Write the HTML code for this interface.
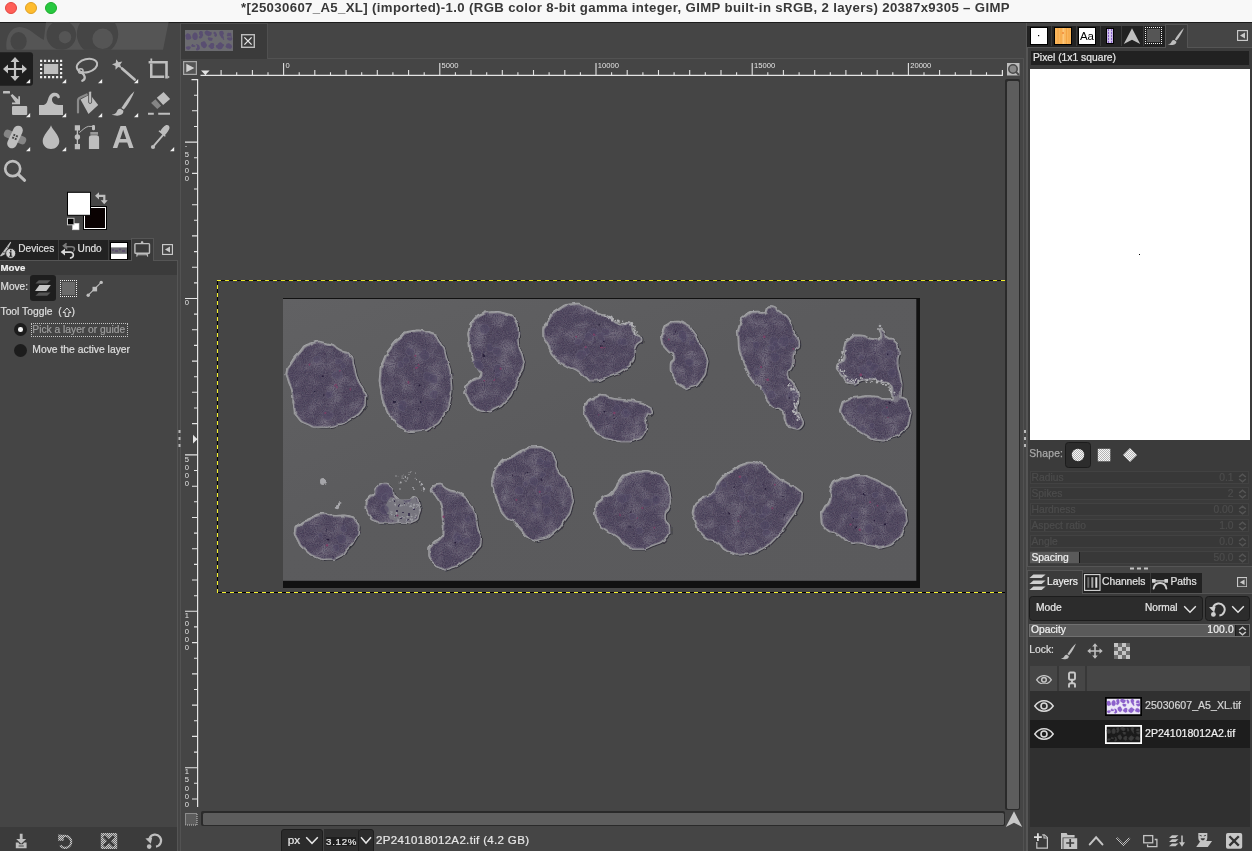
<!DOCTYPE html>
<html lang="en">
<head>
<meta charset="utf-8">
<title>GIMP</title>
<style>
*{box-sizing:border-box;margin:0;padding:0}
html,body{width:1252px;height:851px;overflow:hidden;background:#454545;font-family:"Liberation Sans",sans-serif;color:#dcdcdc;font-size:10.4px}
.abs,.abs *{position:absolute}
#root{position:relative;width:1252px;height:851px;overflow:hidden;background:#454545;will-change:transform}
#root div,#root svg,#root span{position:absolute}
.t{white-space:nowrap;line-height:1;-webkit-text-stroke:0.22px currentColor}
/* title bar */
#titlebar{left:0;top:0;width:1252px;height:23px;background:#f8f8f8;border-bottom:1px solid #1c1c1c}
#titlebar .dot{width:12px;height:12px;border-radius:50%;top:2px}
#title{left:241px;top:1px;font-weight:bold;font-size:13.2px;letter-spacing:0.357px;color:#383838;white-space:nowrap;line-height:14px}
</style>
</head>
<body>
<div id="root">

<!-- TITLEBAR -->
<div id="titlebar">
  <div class="dot" style="left:5px;background:#ff5f57;border:0.5px solid #e2463f"></div>
  <div class="dot" style="left:25px;background:#febc2e;border:0.5px solid #dfa023"></div>
  <div class="dot" style="left:45px;background:#28c840;border:0.5px solid #1dad2b"></div>
  <div id="title">*[25030607_A5_XL] (imported)-1.0 (RGB color 8-bit gamma integer, GIMP built-in sRGB, 2 layers) 20387x9305 – GIMP</div>
</div>

<!-- LEFT-PANEL -->
<svg style="left:0;top:0" width="181" height="240" viewBox="0 0 181 240">
<clipPath id="wb"><rect x="0" y="22.6" width="180" height="27.2"/></clipPath>
<g clip-path="url(#wb)">
<path d="M6.8 50C5 40 9 27.2 19.5 27 C29 27 36 36 43.8 40 L46 22 L168.6 22 L163 50Z" fill="#555"/>
<ellipse cx="18.6" cy="41.2" rx="8.1" ry="9.2" fill="#454545"/>
<circle cx="61.3" cy="35" r="14.8" fill="#454545"/>
<circle cx="65" cy="37.2" r="6.2" fill="#555"/>
<circle cx="97.5" cy="34.2" r="20.7" fill="#454545"/>
<circle cx="102.7" cy="38.7" r="10.3" fill="#555"/>
</g>
<rect x="-3" y="52.3" width="36" height="33.4" rx="3" fill="#1e1e1e"/>
<path d="M15 57l4.500 5h-3.400v5.900h5.900v-3.400l5 4.500-5 4.500v-3.400h-5.900v5.900h3.400L15 81l-4.500-5h3.400v-5.900H8v3.400L3 69l5-4.500v3.400h5.900v-5.900h-3.400z" fill="#c4c4c4"/>
<path d="M30.2 79.0V83.2H26.0z" fill="#f0f0f0"/>
<path d="M40 59.8h2.2v2.2h-2.2zM40 76h2.2v2.2h-2.2zM44 59.8h2.2v2.2h-2.2zM44 76h2.2v2.2h-2.2zM48 59.8h2.2v2.2h-2.2zM48 76h2.2v2.2h-2.2zM52 59.8h2.2v2.2h-2.2zM52 76h2.2v2.2h-2.2zM56 59.8h2.2v2.2h-2.2zM56 76h2.2v2.2h-2.2zM60 59.8h2.2v2.2h-2.2zM60 76h2.2v2.2h-2.2zM40 63.85h2.2v2.2h-2.2zM60 63.85h2.2v2.2h-2.2zM40 67.90h2.2v2.2h-2.2zM60 67.90h2.2v2.2h-2.2zM40 71.95h2.2v2.2h-2.2zM60 71.95h2.2v2.2h-2.2z" fill="#ececec"/>
<rect x="44" y="64" width="14.2" height="10" fill="#bebebe"/>
<path d="M66.2 79.0V83.2H62.0z" fill="#f0f0f0"/>
<g fill="none" stroke="#bebebe" stroke-width="2" stroke-linecap="round"><ellipse cx="87" cy="65.600" rx="10.400" ry="6.500" transform="rotate(-14 87 65.6)"/><circle cx="80.800" cy="71" r="2.300" stroke-width="1.400"/><path d="M81.500 72.500c3.500 2.500 4.800 6.500 0.800 8.200" stroke-width="2.300"/></g>
<path d="M102.2 79.0V83.2H98.0z" fill="#f0f0f0"/>
<path d="M116.2 59.2L118.5 62.3L122.3 61.6L120.1 64.8L121.9 68.2L118.2 67.0L115.5 69.8L115.5 65.9L112.0 64.2L115.7 63.0z" fill="#bebebe"/><path d="M122 68.400l12.600 11.200" stroke="#bebebe" stroke-width="2.700" stroke-linecap="round"/>
<path d="M138.2 79.0V83.2H134.0z" fill="#f0f0f0"/>
<path d="M148.600 61h19.200v17.400h-2.600V63.500h-16.600z" fill="#bebebe"/><path d="M150 63.500h2.500v12h11.700v2.500H150z" fill="#bebebe"/><path d="M150.400 58.600h1.800v2.400h-1.800zM167.800 75.400l2 1.500-2 1.500z" fill="#bebebe"/>
<rect x="3" y="91" width="7" height="2.6" rx="0.6" fill="#bebebe"/><path d="M10.6 95.6l1.7-1.7 6 5.5v-3.2h1.7v8h-8v-1.7h3.6z" fill="#bebebe"/><rect x="12" y="106" width="15.2" height="9" rx="1" fill="#bebebe"/>
<path d="M30.2 113.0V117.2H26.0z" fill="#f0f0f0"/>
<path d="M39 115v-10h3.5c3.6 0 4.6-2.6 5.6-6 1.3-4.4 3.7-6.2 6.6-6.2 3 0 5 2 5.3 4.8l-2 .9c-.8-1.8-1.8-2.3-3-2.3-1.8 0-3 1.400-3 3.400 0 3.200 2.800 5.400 6.400 5.400H63v10z" fill="#bebebe"/>
<path d="M66.2 113.0V117.2H62.0z" fill="#f0f0f0"/>
<path d="M78 112.400v-11.500c0-1.700.9-2.800 2.200-3.300l6.500-3.100" fill="none" stroke="#8a8a8a" stroke-width="2.200" stroke-linecap="round"/><path d="M80.500 99.500l9.500-5 8.200 10.500-9.700 9z" fill="#bebebe"/><rect x="88.600" y="91" width="3" height="12.500" rx="1.500" fill="#bebebe" stroke="#454545" stroke-width="0.800"/>
<path d="M102.2 113.0V117.2H98.0z" fill="#f0f0f0"/>
<path d="M134.300 91.200c-1.500 5-6 13-10.500 18.400l-2.400-1.600c4.400-6.800 8.500-12.800 12.900-16.800z" fill="#bebebe"/><path d="M120.600 108.700l2.600 1.800c1 3-2.500 5.200-6 5.200-2.200 0-4.200-.4-5.400-1.100 3.200-.3 4.300-1.300 5-3 .7-1.800 1.800-3.200 3.800-2.900z" fill="#bebebe"/>
<path d="M138.2 113.0V117.2H134.0z" fill="#f0f0f0"/>
<path d="M163.600 92l6.500 7-7 6-6.300-7.200z" fill="#bebebe"/><path d="M155.400 99.200l5.700 6.500-3.800 3.300-6.200-6z" fill="#858585"/><path d="M148 112.800h5.800v2h-5.800zM158.200 112.800h11.800v2h-11.800z" fill="#bebebe"/>
<g transform="rotate(25 15 137)"><rect x="3.200" y="133" width="23.600" height="8" rx="3.600" fill="#858585"/><rect x="10.200" y="125" width="9.600" height="24" rx="4.800" fill="#bebebe"/><path d="M12.600 134.600h1.900v1.900h-1.900zM15.500 134.600h1.900v1.900h-1.900zM12.600 137.500h1.900v1.900h-1.900zM15.500 137.500h1.900v1.900h-1.900z" fill="#454545"/></g>
<path d="M30.2 147.0V151.2H26.0z" fill="#f0f0f0"/>
<path d="M51 125.300c1.200 4.200 8.300 10 8.300 15.600 0 4.600-3.700 8-8.300 8s-8.300-3.400-8.300-8c0-5.600 7.100-11.400 8.300-15.600z" fill="#bebebe"/>
<path d="M66.2 147.0V151.2H62.0z" fill="#f0f0f0"/>
<path d="M74.800 125.200h5.200v5.200h-5.200zM74.800 144h5.200v5.200h-5.200z" fill="#bebebe"/><circle cx="77.400" cy="137" r="2.700" fill="#bebebe"/><path d="M77.400 130v14" stroke="#bebebe" stroke-width="1.300"/><path d="M79.400 132.600c3-2.600 6-5.600 9-6.200h4" fill="none" stroke="#bebebe" stroke-width="0.900"/><rect x="92" y="125" width="3" height="5.200" rx="1.200" fill="#bebebe"/><rect x="90.300" y="132" width="7.700" height="2.700" fill="#9a9a9a"/><path d="M88.900 149v-11c0-1.600 1-2.700 2.600-2.700h5c1.600 0 2.600 1.100 2.600 2.700v11z" fill="#bebebe"/>
<text x="123.100" y="148.200" font-size="31" font-weight="bold" text-anchor="middle" fill="#bebebe" font-family="Liberation Sans, sans-serif">A</text>
<path d="M166.200 125c2.200-.5 3.800 1.400 3.200 3.600-.5 2-2.600 4.600-4.400 6.300l.8 1-1 .9-1.100-1-9.200 10.800-1.500-1.400 9.300-10.600-3.800-3.300.9-1 1 .7c1.200-2 3.600-5.300 5.800-6z" fill="#bebebe"/><circle cx="153" cy="147" r="2.100" fill="#bebebe"/>
<path d="M174.2 147.0V151.2H170.0z" fill="#f0f0f0"/>
<circle cx="12.700" cy="168.700" r="7.500" fill="none" stroke="#bebebe" stroke-width="2.700"/><path d="M18.300 174.300l6.300 6" stroke="#bebebe" stroke-width="3" stroke-linecap="round"/>
<rect x="83.500" y="206.500" width="23" height="23" fill="#0a0202" stroke="#000" stroke-width="1"/><rect x="84.500" y="207.500" width="21" height="21" fill="none" stroke="#fff" stroke-width="1"/>
<rect x="67.500" y="192.300" width="23" height="23" fill="#fff" stroke="#000" stroke-width="1"/>
<path d="M95 195.800l4-3.600v2.500h6.400v5.600h2.300l-3.500 4-3.500-4h2.500v-3.400h-4.200v2.500z" fill="#bebebe"/>
<rect x="72.500" y="223.300" width="6.500" height="6.500" fill="#fff" stroke="#d0d0d0" stroke-width="0.600"/><rect x="67.500" y="218.300" width="6.500" height="6.500" fill="#000" stroke="#c8c8c8" stroke-width="1"/>
</svg>
<!-- tool options dock: tab bar -->
<div style="left:0;top:240px;width:130.500px;height:20px;background:#222"></div>
<div style="left:58px;top:240px;width:1px;height:20px;background:#3c3c3c"></div>
<div style="left:107.500px;top:240px;width:1px;height:20px;background:#3c3c3c"></div>
<div style="left:130.500px;top:237.500px;width:23px;height:23.500px;background:#3b3b3b;border:1px solid #555;border-bottom:none"></div>
<div style="left:0;top:260px;width:131px;height:1px;background:#555"></div>
<div style="left:153px;top:260px;width:25px;height:1px;background:#555"></div>
<div style="left:177px;top:260px;width:1px;height:591px;background:#555"></div>
<!-- devices tab -->
<svg style="left:0;top:241px" width="18" height="19" viewBox="0 0 18 19"><path d="M10.400 0.800L2.400 11.600 0 14.800l.8.800 3.800-2.200 6.600-12z" fill="#bebebe"/><path d="M2.600 10.600l2.200 1.400M6.500 5.500l1.200.8" stroke="#222" stroke-width="0.700"/><circle cx="10.700" cy="12.400" r="5" fill="#d0d0d0" stroke="#222" stroke-width="0.800"/><path d="M10 8.800h1.500v1.600H10zM9.300 11.200h2.200v3.600h.8v1H9.200v-1h.8v-2.600h-.7z" fill="#222"/></svg>
<span class="t" style="left:18.300px;top:243.800px;font-size:10.100px;color:#dedede">Devices</span>
<!-- undo tab -->
<svg style="left:59.500px;top:242px" width="18" height="18" viewBox="0 0 18 18"><path d="M6.500 1.200L3.400 3.800l3.100 2.600V4.700h5.200c1.700 0 2.800 1 2.800 2.400 0 1-.5 1.800-1.400 2.200" fill="none" stroke="#7a7a7a" stroke-width="1.500"/><path d="M6.500 1.200L3 3.800l3.500 2.600z" fill="#7a7a7a"/><path d="M5 6.600L.6 10.100 5 13.600v-2.600h5.200c1.500 0 2.300.8 2.300 2 0 1.300-1 2.200-2.600 2.300v1.600c2.700-.1 4.300-1.700 4.300-3.900 0-2.200-1.600-3.700-4-3.700H5z" fill="#d8d8d8"/></svg>
<span class="t" style="left:77.600px;top:243.800px;font-size:10.100px;color:#dedede">Undo</span>
<!-- images tab -->
<svg style="left:110px;top:241.500px" width="18" height="18" viewBox="0 0 18 18"><rect x="0.500" y="0.500" width="17" height="17" fill="#fff" stroke="#000"/><rect x="1" y="5.400" width="16" height="6.400" fill="#6a6a70"/><path d="M2 8h2M5 9h3M9 7.500h2M12 9h3" stroke="#5a4a6e" stroke-width="1.400"/></svg>
<!-- tool options tab (active) -->
<svg style="left:133px;top:240px" width="18" height="18" viewBox="0 0 18 18"><path d="M8.200 1.200h1.800l.5 2h-2.800z" fill="#bebebe"/><rect x="1.900" y="3.600" width="14.600" height="9.600" rx="0.800" fill="none" stroke="#bebebe" stroke-width="1.400"/><path d="M3.200 14.800h12M4.600 13.400l-.9 3.300M13.800 13.400l.9 3.300" stroke="#bebebe" stroke-width="1.100" fill="none"/></svg>
<!-- dock menu -->
<svg style="left:161.500px;top:243.500px" width="11" height="11" viewBox="0 0 11 11"><rect x="0.600" y="0.600" width="9.800" height="9.800" fill="none" stroke="#d0d0d0" stroke-width="1.100"/><path d="M8 2.600v5.800L3 5.500z" fill="#c8c8c8"/></svg>
<!-- Move header -->
<div style="left:0;top:261px;width:177px;height:13.500px;background:#3b3b3b"></div>
<span class="t" style="left:0.500px;top:262.600px;font-size:9.700px;font-weight:bold;color:#efefef">Move</span>
<span class="t" style="left:0.500px;top:281.600px;font-size:10.100px;color:#dedede">Move:</span>
<div style="left:30.300px;top:275.200px;width:25.600px;height:25.400px;background:#1e1e1e;border-radius:3px"></div>
<svg style="left:35px;top:280px" width="16" height="16" viewBox="0 0 16 16"><path d="M3.800 0.300h11.800L12.200 3.600H0.400z" fill="#555"/><path d="M3.800 12.400h11.800l-3.400 3.300H0.400z" fill="#555"/><path d="M4.400 5h11.400l-4.400 6H0z" fill="#c6c6c6"/></svg>
<svg style="left:60px;top:280px" width="17" height="17" viewBox="0 0 17 17" shape-rendering="crispEdges"><rect x="2" y="2" width="13" height="13" fill="#6a6a6a"/><path d="M0 0h1v1h-1zM0 16h1v1h-1zM2 0h1v1h-1zM2 16h1v1h-1zM0 2h1v1h-1zM16 2h1v1h-1zM4 0h1v1h-1zM4 16h1v1h-1zM0 4h1v1h-1zM16 4h1v1h-1zM6 0h1v1h-1zM6 16h1v1h-1zM0 6h1v1h-1zM16 6h1v1h-1zM8 0h1v1h-1zM8 16h1v1h-1zM0 8h1v1h-1zM16 8h1v1h-1zM10 0h1v1h-1zM10 16h1v1h-1zM0 10h1v1h-1zM16 10h1v1h-1zM12 0h1v1h-1zM12 16h1v1h-1zM0 12h1v1h-1zM16 12h1v1h-1zM14 0h1v1h-1zM14 16h1v1h-1zM0 14h1v1h-1zM16 14h1v1h-1zM16 0h1v1h-1zM16 16h1v1h-1z" fill="#f0f0f0"/></svg>
<svg style="left:86px;top:279.500px" width="18" height="18" viewBox="0 0 18 18"><path d="M2 15.400L15.200 2.300" stroke="#bebebe" stroke-width="1.100"/><circle cx="2.200" cy="15.200" r="1.700" fill="#bebebe"/><circle cx="15.200" cy="2.400" r="1.700" fill="#bebebe"/><rect x="6.500" y="6.800" width="4.600" height="4.600" fill="#bebebe"/></svg>
<span class="t" style="left:0.500px;top:307.400px;font-size:10.300px;color:#dedede">Tool Toggle&nbsp; (</span>
<svg style="left:62px;top:306.500px" width="10" height="11" viewBox="0 0 10 11"><path d="M5 1L9 5.500H6.800V9.500H3.200V5.500H1z" fill="none" stroke="#dedede" stroke-width="1"/></svg>
<span class="t" style="left:71.400px;top:307.400px;font-size:10.300px;color:#dedede">)</span>
<div style="left:14px;top:322.800px;width:13px;height:13px;border-radius:50%;background:#1c1c1c"></div>
<div style="left:18.200px;top:327px;width:4.600px;height:4.600px;border-radius:50%;background:#f4f4f4"></div>
<div style="left:31px;top:322.500px;width:96.500px;height:14px;border:1px dotted #c4c4c4"></div>
<span class="t" style="left:32.300px;top:324.600px;font-size:10.250px;color:#9c9c9c">Pick a layer or guide</span>
<div style="left:14px;top:343.500px;width:13px;height:13px;border-radius:50%;background:#1c1c1c"></div>
<span class="t" style="left:32.300px;top:345.300px;font-size:10.350px;color:#dedede">Move the active layer</span>
<!-- bottom buttons -->
<div style="left:0;top:826.500px;width:177px;height:25px;background:#3b3b3b"></div>
<svg style="left:0;top:828px" width="178" height="23" viewBox="0 828 178 23">
<defs><pattern id="ck3" width="2" height="2" patternUnits="userSpaceOnUse"><rect width="1" height="1" fill="#c8c8c8"/><rect x="1" y="1" width="1" height="1" fill="#c8c8c8"/><rect x="1" width="1" height="1" fill="#6a6a6a"/><rect y="1" width="1" height="1" fill="#6a6a6a"/></pattern></defs>
<path d="M19.800 833.700h2.800v5.400h3.600l-5 4.600-5-4.600h3.600z" fill="#bebebe"/><path d="M15.800 842.600h2.600l1.200 1.600h3.200l1.200-1.600h2.600v5.600H15.800z" fill="#bebebe"/><path d="M18.600 846h5.200" stroke="#3b3b3b" stroke-width="0.900"/>
<path d="M63.200 836.200A6 6 0 1 1 60.300 845.400" fill="none" stroke="url(#ck3)" stroke-width="2.400"/><path d="M58.200 834.400l6.200.6-1 5.800z" fill="url(#ck3)"/><path d="M58.200 834.400v6.400h6z" fill="url(#ck3)"/>
<rect x="100.800" y="833" width="16.400" height="16" rx="1" fill="url(#ck3)"/><path d="M104 836.200l10 9.800M114 836.200l-10 9.800" stroke="#3b3b3b" stroke-width="2.800"/>
<path d="M149.600 838.200A6 6 0 1 1 156 846.600" fill="none" stroke="#bebebe" stroke-width="2.200"/><path d="M145.400 838.400l6.800-.8-1.400 6.200z" fill="#bebebe"/><circle cx="149.200" cy="846.600" r="2.300" fill="#bebebe"/>
</svg>
<!-- /LEFT-PANEL -->

<!-- CENTER -->
<!-- image tab strip -->
<div style="left:181px;top:23px;width:87px;height:36px;background:#3b3b3b;border-top:1px solid #505050;border-right:1px solid #505050"></div>
<div style="left:268px;top:58px;width:756px;height:1px;background:#525252"></div>
<div style="left:1023px;top:58px;width:1px;height:793px;background:#525252"></div>
<div style="left:180px;top:23px;width:1px;height:828px;background:#525252"></div>
<div style="left:1026px;top:23px;width:1px;height:828px;background:#555"></div>
<!-- paned handles -->
<svg style="left:178px;top:429px" width="3" height="20"><path d="M0.5 1h2v3h-2zM0.5 8h2v3h-2zM0.5 15h2v3h-2z" fill="#b8b8b8"/></svg>
<svg style="left:1024px;top:429px" width="3" height="20"><path d="M0 1h2v3h-2zM0 8h2v3h-2zM0 15h2v3h-2z" fill="#b8b8b8"/></svg>
<!-- tab thumbnail -->
<svg id="tabthumb" style="left:185px;top:30px" width="48" height="21" viewBox="283 298 637 279" preserveAspectRatio="none"><rect x="283" y="298" width="637" height="290" fill="#6b6b70"/><defs><filter id="tb"><feGaussianBlur stdDeviation="7"/></filter></defs><use href="#bl" fill="#564a72" opacity="0.85" filter="url(#tb)"/></svg>
<svg style="left:241px;top:34px" width="14" height="14" viewBox="0 0 14 14"><rect x="0.7" y="0.7" width="12.6" height="12.6" fill="none" stroke="#bdbdbd" stroke-width="1.4"/><path d="M3.4 3.4l7.2 7.2M10.6 3.4l-7.2 7.2" stroke="#e8e8e8" stroke-width="1.3"/></svg>
<!-- ruler corner button -->
<svg style="left:183px;top:61px" width="14" height="14" viewBox="0 0 14 14"><rect x="0.6" y="0.6" width="12.8" height="12.8" fill="#555" stroke="#a8a8a8" stroke-width="1.2"/><path d="M3.3 2.8v8.4l8-4.2z" fill="#cfcfcf"/></svg>
<!-- rulers -->
<svg style="left:0;top:0" width="1252" height="851" viewBox="0 0 1252 851" font-family="Liberation Sans, sans-serif">
<path d="M200.5 75.4H1002.4V70" fill="none" stroke="#e4e4e4" stroke-width="1.2"/>
<path d="M205.5 72.3V75 M221.1 70V75 M236.7 72.3V75 M252.4 70V75 M268.0 72.3V75 M283.6 63V75 M299.2 72.3V75 M314.8 70V75 M330.5 72.3V75 M346.1 70V75 M361.7 72.3V75 M377.3 70V75 M392.9 72.3V75 M408.6 70V75 M424.2 72.3V75 M439.8 63V75 M455.4 72.3V75 M471.0 70V75 M486.7 72.3V75 M502.3 70V75 M517.9 72.3V75 M533.5 70V75 M549.1 72.3V75 M564.8 70V75 M580.4 72.3V75 M596.0 63V75 M611.6 72.3V75 M627.2 70V75 M642.9 72.3V75 M658.5 70V75 M674.1 72.3V75 M689.7 70V75 M705.3 72.3V75 M721.0 70V75 M736.6 72.3V75 M752.2 63V75 M767.8 72.3V75 M783.4 70V75 M799.1 72.3V75 M814.7 70V75 M830.3 72.3V75 M845.9 70V75 M861.5 72.3V75 M877.2 70V75 M892.8 72.3V75 M908.4 63V75 M924.0 72.3V75 M939.6 70V75 M955.3 72.3V75 M970.9 70V75 M986.5 72.3V75" stroke="#e4e4e4" stroke-width="1.1" fill="none"/>
<text x="285.4" y="68" font-size="7.6" fill="#e4e4e4">0</text>
<text x="441.6" y="68" font-size="7.6" fill="#e4e4e4">5000</text>
<text x="597.8" y="68" font-size="7.6" fill="#e4e4e4">10000</text>
<text x="754.0" y="68" font-size="7.6" fill="#e4e4e4">15000</text>
<text x="910.2" y="68" font-size="7.6" fill="#e4e4e4">20000</text>
<path d="M201 70.6h8.6l-4.3 4.4z" fill="#e4e4e4"/>
<path d="M191.5 79.6H197.6V807" fill="none" stroke="#e4e4e4" stroke-width="1.2"/>
<path d="M194 95.2H197.5 M192 110.8H197.5 M194 126.5H197.5 M185 142.1H197.5 M194 157.7H197.5 M192 173.4H197.5 M194 189.0H197.5 M192 204.7H197.5 M194 220.3H197.5 M192 235.9H197.5 M194 251.6H197.5 M192 267.2H197.5 M194 282.9H197.5 M185 298.5H197.5 M194 314.1H197.5 M192 329.8H197.5 M194 345.4H197.5 M192 361.1H197.5 M194 376.7H197.5 M192 392.3H197.5 M194 408.0H197.5 M192 423.6H197.5 M194 439.3H197.5 M185 454.9H197.5 M194 470.5H197.5 M192 486.2H197.5 M194 501.8H197.5 M192 517.5H197.5 M194 533.1H197.5 M192 548.7H197.5 M194 564.4H197.5 M192 580.0H197.5 M194 595.7H197.5 M185 611.3H197.5 M194 626.9H197.5 M192 642.6H197.5 M194 658.2H197.5 M192 673.9H197.5 M194 689.5H197.5 M192 705.1H197.5 M194 720.8H197.5 M192 736.4H197.5 M194 752.1H197.5 M185 767.7H197.5 M194 783.3H197.5 M192 799.0H197.5" stroke="#e4e4e4" stroke-width="1.1" fill="none"/>
<text x="184.8" y="147.9" font-size="7.6" fill="#e4e4e4">-</text>
<text x="184.8" y="156.8" font-size="7.6" fill="#e4e4e4">5</text>
<text x="184.8" y="164.9" font-size="7.6" fill="#e4e4e4">0</text>
<text x="184.8" y="173.0" font-size="7.6" fill="#e4e4e4">0</text>
<text x="184.8" y="181.1" font-size="7.6" fill="#e4e4e4">0</text>
<text x="184.8" y="305.1" font-size="7.6" fill="#e4e4e4">0</text>
<text x="184.8" y="461.5" font-size="7.6" fill="#e4e4e4">5</text>
<text x="184.8" y="469.6" font-size="7.6" fill="#e4e4e4">0</text>
<text x="184.8" y="477.7" font-size="7.6" fill="#e4e4e4">0</text>
<text x="184.8" y="485.8" font-size="7.6" fill="#e4e4e4">0</text>
<text x="184.8" y="617.9" font-size="7.6" fill="#e4e4e4">1</text>
<text x="184.8" y="626.0" font-size="7.6" fill="#e4e4e4">0</text>
<text x="184.8" y="634.1" font-size="7.6" fill="#e4e4e4">0</text>
<text x="184.8" y="642.2" font-size="7.6" fill="#e4e4e4">0</text>
<text x="184.8" y="650.3" font-size="7.6" fill="#e4e4e4">0</text>
<text x="184.8" y="774.3" font-size="7.6" fill="#e4e4e4">1</text>
<text x="184.8" y="782.4" font-size="7.6" fill="#e4e4e4">5</text>
<text x="184.8" y="790.5" font-size="7.6" fill="#e4e4e4">0</text>
<text x="184.8" y="798.6" font-size="7.6" fill="#e4e4e4">0</text>
<text x="184.8" y="806.7" font-size="7.6" fill="#e4e4e4">0</text>
<path d="M193 434.8v8.8l4.4-4.4z" fill="#e4e4e4"/>
</svg>
<!-- canvas content -->
<div id="canvas" style="left:198px;top:76px;width:807px;height:735px;overflow:hidden">
<svg style="left:0;top:0" width="807" height="735" viewBox="198 76 807 735">
<defs>
<path id="bl" d="M310.2 343.7C319.8 340.3 316.9 340.8 327.4 342.9C337.9 345.0 333.9 346.0 341.8 350.1C349.7 354.2 346.9 349.9 351.2 355.2C355.5 360.5 352.4 358.0 354.8 365.9C357.2 373.8 355.1 370.7 358.4 378.9C361.7 387.1 361.9 383.7 364.8 390.4C367.7 397.1 367.7 392.3 367.0 399.0C366.3 405.7 368.2 403.5 362.7 410.5C357.2 417.5 358.9 414.9 350.5 419.9C342.1 424.9 347.6 423.0 337.5 425.6C327.4 428.2 330.4 428.0 320.3 427.8C310.2 427.6 315.0 428.3 307.3 424.9C299.6 421.5 301.8 423.5 297.3 417.7C292.8 411.9 295.4 415.7 293.7 407.6C292.0 399.5 294.1 402.4 292.2 393.3C290.3 384.2 289.8 387.5 287.9 380.3C286.0 373.1 285.5 377.4 286.5 371.7C287.5 366.0 286.7 369.3 290.8 363.1C294.9 356.9 292.2 359.5 298.7 353.0C305.2 346.5 300.6 347.1 310.2 343.7Z M409.4 331.4C419.0 330.0 419.0 329.1 429.5 332.9C440.0 336.7 435.0 334.3 441.0 342.9C447.0 351.5 443.9 346.3 447.5 358.8C451.1 371.3 450.8 365.9 451.8 380.3C452.8 394.7 453.0 389.9 450.4 401.9C447.8 413.9 449.9 407.7 443.9 416.3C437.9 424.9 441.0 422.8 432.4 427.8C423.8 432.8 428.1 430.9 418.0 431.4C407.9 431.9 410.8 433.3 402.2 429.2C393.6 425.1 397.8 426.3 392.1 419.1C386.4 411.9 388.8 417.2 385.0 407.6C381.2 398.0 382.3 401.4 380.6 390.4C378.9 379.4 378.9 384.7 379.9 374.6C380.9 364.5 379.4 369.8 383.5 360.2C387.6 350.6 386.3 353.5 392.1 345.8C397.9 338.1 395.0 342.0 400.8 337.2C406.6 332.4 399.8 332.8 409.4 331.4Z M489.5 312.0C497.5 311.8 497.5 310.8 506.4 313.4C515.3 316.0 512.1 313.8 516.3 319.7C520.5 325.6 518.2 323.0 519.1 331.0C520.0 339.0 517.7 335.2 519.1 343.7C520.5 352.2 521.7 348.9 523.3 356.4C524.9 363.9 525.4 359.2 524.0 366.3C522.6 373.4 522.4 369.6 519.1 377.6C515.8 385.6 518.4 382.3 514.2 390.3C510.0 398.3 512.3 395.3 506.4 401.6C500.5 407.9 503.5 405.8 496.5 409.3C489.5 412.8 492.8 412.8 485.3 412.1C477.8 411.4 479.9 411.7 474.0 407.2C468.1 402.7 470.4 404.8 467.6 398.7C464.8 392.6 464.3 395.0 465.5 388.9C466.7 382.8 466.3 384.6 471.2 380.4C476.1 376.2 478.2 380.0 480.3 376.2C482.4 372.4 480.3 375.2 477.5 369.1C474.7 363.0 474.7 366.7 471.9 357.8C469.1 348.9 470.0 351.7 469.0 342.3C468.0 332.9 467.1 337.1 469.0 329.6C470.9 322.1 470.2 324.9 474.7 319.7C479.2 314.5 477.5 316.7 482.4 314.1C487.3 311.5 481.5 312.2 489.5 312.0Z M573.2 303.8C583.3 302.7 579.1 303.8 587.6 307.0C596.1 310.2 591.5 310.2 598.8 313.4C606.1 316.6 602.7 313.3 609.5 316.6C616.3 319.9 612.2 321.3 619.3 323.2C626.4 325.1 626.0 319.6 630.9 322.3C635.8 325.0 630.3 325.9 634.1 331.4C637.9 336.9 641.8 333.3 642.4 338.8C643.0 344.3 638.8 340.4 635.8 347.8C632.8 355.2 637.1 353.6 633.3 361.0C629.5 368.4 631.7 365.1 624.3 370.0C616.9 374.9 621.0 372.0 611.1 375.8C601.2 379.6 603.5 381.0 594.7 381.5C585.9 382.0 590.8 380.9 584.8 377.4C578.8 373.9 582.6 374.4 576.6 370.9C570.6 367.4 573.8 370.9 566.8 366.9C559.8 362.9 562.0 365.8 555.6 358.9C549.2 352.0 551.9 354.6 547.7 346.1C543.5 337.6 542.9 341.8 542.9 333.3C542.9 324.8 542.9 328.3 547.7 320.6C552.5 312.9 548.7 315.8 557.2 310.2C565.7 304.6 563.1 304.9 573.2 303.8Z M602.9 395.5C608.9 395.8 605.7 396.6 612.8 398.0C619.9 399.4 616.1 398.5 624.3 399.6C632.5 400.7 629.7 399.6 637.4 401.3C645.1 403.0 642.4 401.9 647.3 404.6C652.2 407.3 650.8 405.9 652.2 409.5C653.6 413.1 653.3 412.8 651.4 415.3C649.5 417.8 647.9 413.6 646.5 416.9C645.1 420.2 648.1 419.1 647.3 425.1C646.5 431.1 647.8 429.8 644.0 435.0C640.2 440.2 642.4 438.3 635.8 440.8C629.2 443.3 632.0 442.4 624.3 442.4C616.6 442.4 620.5 442.7 612.8 440.8C605.1 438.9 607.9 440.2 601.3 436.6C594.7 433.0 597.4 435.0 593.0 430.1C588.6 425.2 591.1 427.8 588.1 421.8C585.1 415.8 584.6 418.3 584.0 412.0C583.4 405.7 582.8 407.8 586.4 402.9C590.0 398.0 589.2 399.7 594.7 397.2C600.2 394.7 596.9 395.2 602.9 395.5Z M675.3 321.5C681.0 321.5 679.1 320.7 685.1 324.0C691.1 327.3 688.5 325.1 693.4 331.4C698.3 337.7 695.5 335.2 699.9 342.9C704.3 350.6 704.0 346.2 706.5 354.4C709.0 362.6 708.9 358.8 707.3 367.6C705.7 376.4 706.8 373.9 701.6 380.7C696.4 387.5 698.3 385.9 691.7 388.1C685.1 390.3 687.8 390.9 681.8 387.3C675.8 383.7 677.4 384.5 673.6 377.4C669.8 370.3 670.3 372.7 670.3 365.9C670.3 359.1 674.7 361.8 673.6 356.9C672.5 352.0 671.1 356.3 667.0 351.1C662.9 345.9 662.7 348.4 661.3 341.3C659.9 334.2 660.7 335.5 662.9 329.7C665.1 323.9 663.8 326.7 667.9 324.0C672.0 321.3 669.6 321.5 675.3 321.5Z M770.1 306.8C776.2 306.8 774.9 307.7 781.9 312.3C788.9 316.9 786.7 314.1 791.0 320.5C795.3 326.9 791.7 323.5 794.7 331.4C797.7 339.3 800.1 336.9 800.1 344.2C800.1 351.5 797.1 346.0 794.7 353.3C792.3 360.6 795.0 358.7 792.9 366.0C790.8 373.3 787.7 369.0 788.3 375.1C788.9 381.2 791.1 377.0 794.7 384.3C798.3 391.6 798.3 388.5 799.2 397.0C800.1 405.5 796.8 403.7 797.4 409.8C798.0 415.9 799.3 409.8 801.1 415.2C802.9 420.6 805.6 421.5 802.9 426.1C800.2 430.7 798.7 430.1 792.9 428.9C787.1 427.7 789.3 428.3 785.6 422.5C781.9 416.7 786.8 417.1 781.9 411.6C777.0 406.1 777.4 412.2 771.0 406.1C764.6 400.0 766.7 400.1 762.8 393.4C758.9 386.7 762.5 389.8 759.2 386.1C755.9 382.4 756.8 387.3 752.8 382.4C748.8 377.5 751.3 380.0 747.3 371.5C743.3 363.0 743.9 367.2 740.9 356.9C737.9 346.6 738.8 350.8 738.2 340.5C737.6 330.2 736.7 334.5 739.1 326.0C741.5 317.5 739.7 319.9 745.5 315.0C751.3 310.1 750.3 312.3 756.4 311.4C762.5 310.5 759.1 313.8 763.7 312.3C768.3 310.8 764.0 306.8 770.1 306.8Z M860.3 335.1C868.2 335.1 866.3 338.1 873.0 338.7C879.7 339.3 878.1 339.8 880.3 336.9C882.5 334.0 878.3 332.0 879.5 329.9C880.7 327.8 881.2 328.3 883.9 330.6C886.6 332.9 883.9 333.6 887.6 336.9C891.3 340.2 891.0 336.3 894.9 340.5C898.8 344.7 898.2 341.7 899.4 349.6C900.6 357.5 897.9 355.1 898.5 364.2C899.1 373.3 900.0 368.5 901.2 377.0C902.4 385.5 902.8 382.7 902.1 389.7C901.4 396.7 902.4 395.9 899.0 398.0C895.6 400.1 894.9 400.0 892.0 396.0C889.1 392.0 894.2 390.6 890.3 386.1C886.4 381.6 888.5 384.2 880.3 382.4C872.1 380.6 875.4 380.0 865.7 380.6C856.0 381.2 859.0 385.5 851.1 384.3C843.2 383.1 846.8 383.1 842.0 377.0C837.2 370.9 836.0 372.1 836.6 366.0C837.2 359.9 841.5 364.9 843.9 358.8C846.3 352.7 842.1 354.5 843.9 347.8C845.7 341.1 843.8 342.9 849.3 338.7C854.8 334.5 852.4 335.1 860.3 335.1Z M858.4 397.0C867.5 395.8 865.1 395.5 874.8 396.1C884.5 396.7 878.5 398.5 887.6 398.8C896.7 399.1 894.8 394.6 902.1 397.0C909.4 399.4 906.7 398.8 909.4 406.1C912.1 413.4 912.1 410.4 910.3 418.9C908.5 427.4 910.4 424.9 904.0 431.6C897.6 438.3 900.3 435.9 891.2 438.9C882.1 441.9 885.7 441.9 876.6 440.7C867.5 439.5 872.4 440.2 863.9 435.3C855.4 430.4 858.4 432.2 851.1 426.1C843.8 420.0 845.3 423.7 842.0 417.0C838.7 410.3 839.3 411.9 841.1 406.1C842.9 400.3 841.7 402.7 847.5 399.7C853.3 396.7 849.3 398.2 858.4 397.0Z M321.6 513.7C329.4 512.6 323.8 514.6 333.3 515.4C342.8 516.2 342.3 514.0 350.1 516.2C357.9 518.4 353.7 517.4 356.8 522.1C359.9 526.8 359.9 524.3 359.3 530.4C358.7 536.5 358.7 534.3 355.1 540.5C351.5 546.7 353.4 543.3 348.4 548.9C343.4 554.5 346.7 553.7 340.0 557.3C333.3 560.9 336.1 559.5 328.3 559.8C320.5 560.1 324.3 561.2 316.5 558.1C308.7 555.0 311.2 556.5 304.8 550.6C298.4 544.7 300.7 547.2 297.3 540.5C293.9 533.8 293.9 536.0 294.7 530.4C295.5 524.8 294.8 527.6 299.8 523.7C304.8 519.8 302.5 522.0 309.8 518.7C317.1 515.4 313.8 514.8 321.6 513.7Z M383.6 483.5C388.9 483.5 387.5 482.3 392.0 486.8C396.5 491.3 392.1 492.4 397.1 496.9C402.1 501.4 401.0 500.3 407.1 500.3C413.2 500.3 411.3 495.2 415.5 496.9C419.7 498.6 418.3 499.7 419.7 505.3C421.1 510.9 421.7 508.1 419.7 513.7C417.7 519.3 420.2 519.0 413.8 522.1C407.4 525.2 409.3 522.4 400.4 522.9C391.5 523.4 395.4 524.0 387.0 523.7C378.6 523.4 381.5 524.9 375.3 522.1C369.1 519.3 371.9 521.0 368.5 515.4C365.1 509.8 365.2 511.5 365.2 505.3C365.2 499.1 365.4 500.8 368.5 496.9C371.6 493.0 371.9 496.9 374.4 493.5C376.9 490.1 373.0 490.1 376.1 486.8C379.2 483.5 378.3 483.5 383.6 483.5Z M439.0 484.3C445.1 484.0 441.7 486.3 449.0 489.4C456.3 492.5 454.1 489.3 460.8 493.5C467.5 497.7 464.2 495.2 469.2 501.9C474.2 508.6 472.8 505.3 475.9 513.7C479.0 522.1 476.4 518.2 478.4 527.1C480.4 536.0 482.6 532.1 481.8 540.5C481.0 548.9 481.8 545.0 475.9 552.3C470.0 559.6 472.5 556.7 464.1 562.3C455.7 567.9 458.5 566.8 450.7 569.0C442.9 571.2 446.8 571.2 440.7 569.0C434.6 566.8 436.2 567.9 432.3 562.3C428.4 556.7 428.9 558.4 428.9 552.3C428.9 546.2 428.4 548.9 432.3 543.9C436.2 538.9 437.1 541.7 440.7 537.2C444.3 532.7 442.7 536.6 443.2 530.4C443.7 524.2 443.1 526.5 442.3 518.7C441.5 510.9 442.9 514.3 440.7 507.0C438.5 499.7 439.0 502.5 435.6 496.9C432.2 491.3 429.5 494.4 430.6 490.2C431.7 486.0 432.9 484.6 439.0 484.3Z M534.6 446.8C542.5 446.8 540.4 445.6 547.4 449.6C554.4 453.6 552.0 452.0 555.6 458.7C559.2 465.4 554.4 462.3 558.3 469.6C562.2 476.9 562.5 472.0 567.4 480.5C572.3 489.0 571.4 486.0 572.9 495.1C574.4 504.2 574.4 499.4 572.0 507.9C569.6 516.4 571.4 512.1 565.6 520.6C559.8 529.1 562.6 527.0 554.7 533.4C546.8 539.8 550.4 537.9 541.9 539.7C533.4 541.5 536.5 542.1 529.2 538.8C521.9 535.5 525.3 535.2 520.1 529.7C514.9 524.2 518.9 526.6 513.7 522.4C508.5 518.2 509.8 523.1 504.6 517.0C499.4 510.9 501.8 513.3 498.2 504.2C494.6 495.1 495.5 498.7 493.7 489.6C491.9 480.5 490.7 486.0 492.8 476.9C494.9 467.8 493.9 469.0 500.0 462.3C506.1 455.6 503.1 461.1 511.0 456.9C518.9 452.7 515.8 453.0 523.7 449.6C531.6 446.2 526.7 446.8 534.6 446.8Z M638.5 471.4C647.6 470.8 645.8 469.3 654.9 472.3C664.0 475.3 660.7 474.1 665.8 480.5C670.9 486.9 668.8 483.0 670.3 491.5C671.8 500.0 671.8 497.5 670.3 506.0C668.8 514.5 665.8 509.7 665.8 517.0C665.8 524.3 670.3 520.6 670.3 527.9C670.3 535.2 671.6 532.7 665.8 538.8C660.0 544.9 662.1 542.4 653.0 546.1C643.9 549.8 647.6 549.8 638.5 549.8C629.4 549.8 633.0 550.4 625.7 546.1C618.4 541.8 623.3 541.9 616.6 537.0C609.9 532.1 612.1 536.4 605.7 531.5C599.3 526.6 600.8 530.3 597.5 522.4C594.2 514.5 594.2 515.8 595.7 507.9C597.2 500.0 596.2 504.3 602.0 498.8C607.8 493.3 606.9 498.2 613.0 491.5C619.1 484.8 615.5 484.5 620.3 478.7C625.1 472.9 621.4 476.6 627.5 474.2C633.6 471.8 629.4 472.0 638.5 471.4Z M752.8 462.3C759.2 462.3 755.4 460.4 762.4 464.2C769.4 468.0 765.6 467.4 773.9 473.8C782.2 480.2 779.0 478.2 787.3 483.3C795.6 488.4 793.7 484.6 798.8 489.1C803.9 493.6 803.0 490.4 802.7 496.8C802.4 503.2 802.4 500.0 797.9 508.3C793.4 516.6 796.7 511.5 789.3 521.7C781.9 531.9 785.4 529.3 775.8 538.9C766.2 548.5 771.3 545.0 760.5 550.4C749.7 555.8 754.2 554.6 743.3 555.2C732.4 555.8 736.9 556.4 727.9 552.3C718.9 548.2 724.7 547.9 716.4 542.8C708.1 537.7 710.0 544.0 703.0 537.0C696.0 530.0 698.5 531.3 695.3 521.7C692.1 512.1 691.5 516.0 693.4 508.3C695.3 500.6 694.7 503.8 701.1 498.7C707.5 493.6 706.2 499.3 712.6 492.9C719.0 486.5 713.3 487.2 720.3 479.5C727.3 471.8 726.0 475.0 733.7 469.9C741.4 464.8 736.9 466.7 743.3 464.2C749.7 461.7 746.4 462.3 752.8 462.3Z M860.2 474.7C867.9 474.7 864.0 474.7 871.7 477.6C879.4 480.5 875.5 478.8 883.2 483.3C890.9 487.8 888.3 484.6 894.7 491.0C901.1 497.4 898.2 494.2 902.3 502.5C906.4 510.8 906.1 507.6 907.1 515.9C908.1 524.2 908.1 519.7 905.2 527.4C902.3 535.1 905.2 532.2 898.5 538.9C891.8 545.6 894.0 545.0 885.1 547.6C876.2 550.2 880.0 547.9 871.7 546.6C863.4 545.3 867.9 545.0 860.2 543.7C852.5 542.4 856.4 545.7 848.7 542.8C841.0 539.9 844.9 539.6 837.2 535.1C829.5 530.6 831.1 535.1 825.7 529.3C820.3 523.5 821.5 524.8 820.9 517.8C820.3 510.8 820.9 514.0 823.8 508.3C826.7 502.6 827.0 507.6 829.5 500.6C832.0 493.6 828.2 494.2 831.4 487.2C834.6 480.2 833.3 482.7 839.1 479.5C844.9 476.3 841.7 479.2 848.7 477.6C855.7 476.0 852.5 474.7 860.2 474.7Z"/><clipPath id="blc"><use href="#bl"/></clipPath>
<filter id="tex" x="-2%" y="-2%" width="104%" height="104%" color-interpolation-filters="sRGB">
<feMorphology in="SourceGraphic" operator="erode" radius="1" result="sg"/>
<feTurbulence type="fractalNoise" baseFrequency="0.07" numOctaves="2" seed="4" result="n"/>
<feColorMatrix in="n" type="matrix" values="0 0 0 0 0.53  0 0 0 0 0.51  0 0 0 0 0.56  1.7 0 0 0 -0.72" result="m"/>
<feComposite in="m" in2="sg" operator="in" result="mm"/>
<feTurbulence type="fractalNoise" baseFrequency="0.9" numOctaves="1" seed="9" result="n2"/>
<feColorMatrix in="n2" type="matrix" values="0 0 0 0 0.2  0 0 0 0 0.16  0 0 0 0 0.27  0 1.3 0 0 -0.48" result="d"/>
<feComposite in="d" in2="sg" operator="in" result="dd"/>
<feTurbulence type="fractalNoise" baseFrequency="0.9" numOctaves="1" seed="3" result="n3"/>
<feColorMatrix in="n3" type="matrix" values="0 0 0 0 0.5  0 0 0 0 0.48  0 0 0 0 0.54  0 0 1.0 0 -0.5" result="l"/>
<feComposite in="l" in2="sg" operator="in" result="ll"/>
<feMerge><feMergeNode in="sg"/><feMergeNode in="mm"/><feMergeNode in="dd"/><feMergeNode in="ll"/></feMerge>
</filter>
<filter id="rough" x="-2%" y="-2%" width="104%" height="104%">
<feTurbulence type="fractalNoise" baseFrequency="0.1" numOctaves="2" seed="12" result="t"/>
<feDisplacementMap in="SourceGraphic" in2="t" scale="3.2" xChannelSelector="R" yChannelSelector="G" result="dm"/><feGaussianBlur in="dm" stdDeviation="0.45"/>
</filter>
<linearGradient id="bgg" x1="0" y1="0" x2="1" y2="1"><stop offset="0" stop-color="#616163"/><stop offset="0.45" stop-color="#5b5b5d"/><stop offset="1" stop-color="#5a5a5c"/></linearGradient>
</defs>
<rect x="283" y="298" width="637" height="290" fill="#111"/>
<rect x="283" y="299" width="633.3" height="281.8" fill="url(#bgg)"/>
<g filter="url(#rough)">
<use href="#bl" fill="#1e1a2a" transform="translate(1.1 0.7)" opacity="0.6"/>
<use href="#bl" fill="#a6a6a9" transform="translate(-0.6 -0.6)"/>
<use href="#bl" fill="#8e8e92"/>
<g filter="url(#tex)"><use href="#bl" fill="#554d63"/></g>
<use href="#bl" fill="none" stroke="#a4a4a7" stroke-width="4" opacity="0.4" clip-path="url(#blc)"/>
<path d="M390 497C398 500 408 500 415 498L419 506 419 514 413 521 398 522 390 519 384 508Z" fill="#7b7a82" opacity="0.9"/><path d="M392 500h2v1h-2zM398 504h2v2h-2zM404 502h1v2h-1zM409 506h2v1h-2zM396 510h2v2h-2zM402 512h2v1h-2zM408 514h2v2h-2zM413 509h2v2h-2zM400 517h2v2h-2zM406 519h3v1h-3zM394 515h1v2h-1zM411 503h2v1h-2z" fill="#3c3650"/>
<circle cx="383.6" cy="492" r="8.8" fill="#554d69" opacity="0.55"/>
<circle cx="860.9" cy="378.1" r="1.0" fill="#b4b4b7"/><circle cx="837.9" cy="368.2" r="0.5" fill="#b4b4b7"/><circle cx="866.7" cy="380.6" r="0.5" fill="#b4b4b7"/><circle cx="876.3" cy="382.1" r="1.1" fill="#b4b4b7"/><circle cx="881.0" cy="382.1" r="0.8" fill="#b4b4b7"/><circle cx="843.5" cy="373.2" r="0.7" fill="#b4b4b7"/><circle cx="889.3" cy="387.1" r="0.7" fill="#b4b4b7"/><circle cx="884.8" cy="384.4" r="0.8" fill="#b4b4b7"/><circle cx="880.3" cy="383.1" r="0.8" fill="#b4b4b7"/><circle cx="851.6" cy="382.7" r="0.5" fill="#b4b4b7"/><circle cx="858.0" cy="382.0" r="0.7" fill="#b4b4b7"/><circle cx="838.2" cy="367.8" r="0.6" fill="#b4b4b7"/><circle cx="869.9" cy="378.6" r="0.8" fill="#b4b4b7"/><circle cx="853.4" cy="381.3" r="1.0" fill="#b4b4b7"/><circle cx="844.2" cy="370.9" r="0.9" fill="#b4b4b7"/><circle cx="840.8" cy="370.7" r="0.9" fill="#b4b4b7"/><circle cx="865.5" cy="381.0" r="0.5" fill="#b4b4b7"/><circle cx="867.5" cy="380.3" r="0.6" fill="#b4b4b7"/><circle cx="850.4" cy="381.3" r="1.0" fill="#b4b4b7"/><circle cx="838.4" cy="366.0" r="0.6" fill="#b4b4b7"/><circle cx="873.1" cy="380.5" r="0.7" fill="#b4b4b7"/><circle cx="873.9" cy="379.5" r="0.6" fill="#b4b4b7"/><circle cx="844.5" cy="370.7" r="0.7" fill="#b4b4b7"/><circle cx="845.4" cy="376.5" r="1.1" fill="#b4b4b7"/><circle cx="894.3" cy="392.6" r="0.9" fill="#b4b4b7"/><circle cx="875.8" cy="382.5" r="1.0" fill="#b4b4b7"/><circle cx="867.1" cy="380.3" r="0.7" fill="#b4b4b7"/><circle cx="842.2" cy="371.2" r="0.7" fill="#b4b4b7"/><circle cx="838.8" cy="366.8" r="1.1" fill="#b4b4b7"/><circle cx="878.0" cy="381.6" r="0.6" fill="#b4b4b7"/><circle cx="861.9" cy="380.0" r="0.6" fill="#b4b4b7"/><circle cx="875.8" cy="380.9" r="0.6" fill="#b4b4b7"/><circle cx="842.8" cy="370.4" r="0.9" fill="#b4b4b7"/><circle cx="878.3" cy="381.2" r="0.6" fill="#b4b4b7"/><circle cx="888.1" cy="383.8" r="0.9" fill="#b4b4b7"/><circle cx="840.4" cy="369.6" r="0.6" fill="#b4b4b7"/><circle cx="848.0" cy="376.6" r="0.6" fill="#b4b4b7"/><circle cx="850.0" cy="381.1" r="0.6" fill="#b4b4b7"/><circle cx="882.9" cy="385.1" r="1.0" fill="#b4b4b7"/><circle cx="866.5" cy="382.3" r="0.8" fill="#b4b4b7"/><circle cx="894.9" cy="392.3" r="0.6" fill="#b4b4b7"/><circle cx="845.6" cy="376.6" r="1.1" fill="#b4b4b7"/><circle cx="886.0" cy="385.0" r="1.0" fill="#b4b4b7"/><circle cx="840.5" cy="370.5" r="0.9" fill="#b4b4b7"/><circle cx="844.9" cy="378.1" r="0.7" fill="#b4b4b7"/><circle cx="889.5" cy="390.1" r="0.9" fill="#b4b4b7"/><circle cx="847.9" cy="382.3" r="0.8" fill="#b4b4b7"/><circle cx="890.2" cy="388.3" r="0.9" fill="#b4b4b7"/><circle cx="852.1" cy="379.6" r="1.0" fill="#b4b4b7"/><circle cx="891.4" cy="392.1" r="0.8" fill="#b4b4b7"/><circle cx="847.5" cy="379.2" r="0.7" fill="#b4b4b7"/><circle cx="847.6" cy="379.8" r="1.0" fill="#b4b4b7"/><circle cx="841.9" cy="371.3" r="0.9" fill="#b4b4b7"/><circle cx="882.9" cy="382.7" r="0.8" fill="#b4b4b7"/><circle cx="883.8" cy="384.3" r="0.9" fill="#b4b4b7"/><circle cx="844.1" cy="374.7" r="0.8" fill="#b4b4b7"/><circle cx="858.3" cy="380.6" r="1.0" fill="#b4b4b7"/><circle cx="875.3" cy="379.2" r="0.6" fill="#b4b4b7"/><circle cx="871.0" cy="382.4" r="0.8" fill="#b4b4b7"/><circle cx="888.1" cy="383.6" r="0.7" fill="#b4b4b7"/><circle cx="882.3" cy="385.1" r="0.9" fill="#b4b4b7"/><circle cx="862.8" cy="378.8" r="0.8" fill="#b4b4b7"/><circle cx="863.4" cy="378.2" r="0.6" fill="#b4b4b7"/><circle cx="838.2" cy="365.6" r="1.0" fill="#b4b4b7"/><circle cx="890.6" cy="389.1" r="0.6" fill="#b4b4b7"/><circle cx="867.1" cy="379.8" r="0.8" fill="#b4b4b7"/><circle cx="890.7" cy="391.4" r="0.8" fill="#b4b4b7"/><circle cx="854.4" cy="379.4" r="0.7" fill="#b4b4b7"/><circle cx="856.4" cy="378.8" r="0.7" fill="#b4b4b7"/><circle cx="881.6" cy="380.5" r="1.1" fill="#b4b4b7"/>
<circle cx="838.7" cy="360.8" r="0.5" fill="#b4b4b7"/><circle cx="842.3" cy="353.0" r="1.0" fill="#b4b4b7"/><circle cx="843.1" cy="354.9" r="0.8" fill="#b4b4b7"/><circle cx="843.0" cy="351.8" r="0.8" fill="#b4b4b7"/><circle cx="841.9" cy="351.7" r="0.7" fill="#b4b4b7"/><circle cx="846.0" cy="350.6" r="0.7" fill="#b4b4b7"/><circle cx="839.5" cy="359.8" r="0.8" fill="#b4b4b7"/><circle cx="842.0" cy="360.4" r="0.6" fill="#b4b4b7"/><circle cx="842.0" cy="356.5" r="0.8" fill="#b4b4b7"/><circle cx="844.7" cy="355.0" r="0.5" fill="#b4b4b7"/><circle cx="841.5" cy="357.7" r="0.8" fill="#b4b4b7"/><circle cx="845.6" cy="351.0" r="0.8" fill="#b4b4b7"/><circle cx="839.5" cy="360.6" r="0.6" fill="#b4b4b7"/><circle cx="841.6" cy="360.5" r="0.7" fill="#b4b4b7"/>
<circle cx="795.7" cy="407.5" r="0.9" fill="#b4b4b7"/><circle cx="793.6" cy="406.2" r="0.7" fill="#b4b4b7"/><circle cx="796.1" cy="404.6" r="0.6" fill="#b4b4b7"/><circle cx="794.5" cy="407.8" r="1.1" fill="#b4b4b7"/><circle cx="798.5" cy="403.0" r="0.7" fill="#b4b4b7"/><circle cx="789.7" cy="385.6" r="0.9" fill="#b4b4b7"/><circle cx="793.6" cy="395.9" r="0.6" fill="#b4b4b7"/><circle cx="795.8" cy="413.7" r="0.9" fill="#b4b4b7"/><circle cx="793.1" cy="389.9" r="0.9" fill="#b4b4b7"/><circle cx="798.1" cy="416.1" r="0.7" fill="#b4b4b7"/><circle cx="796.7" cy="394.3" r="0.9" fill="#b4b4b7"/><circle cx="798.0" cy="401.4" r="1.0" fill="#b4b4b7"/><circle cx="794.5" cy="392.5" r="0.9" fill="#b4b4b7"/><circle cx="793.0" cy="393.5" r="1.1" fill="#b4b4b7"/><circle cx="797.6" cy="417.3" r="0.9" fill="#b4b4b7"/><circle cx="793.6" cy="398.3" r="0.9" fill="#b4b4b7"/><circle cx="791.2" cy="390.4" r="0.7" fill="#b4b4b7"/><circle cx="793.0" cy="392.0" r="0.6" fill="#b4b4b7"/><circle cx="795.4" cy="413.9" r="0.9" fill="#b4b4b7"/><circle cx="793.8" cy="386.9" r="0.6" fill="#b4b4b7"/><circle cx="796.0" cy="407.8" r="0.6" fill="#b4b4b7"/><circle cx="793.1" cy="411.3" r="0.9" fill="#b4b4b7"/><circle cx="795.2" cy="412.2" r="0.8" fill="#b4b4b7"/><circle cx="795.2" cy="391.0" r="0.6" fill="#b4b4b7"/><circle cx="793.9" cy="411.7" r="1.1" fill="#b4b4b7"/><circle cx="797.4" cy="420.0" r="1.1" fill="#b4b4b7"/><circle cx="791.2" cy="388.8" r="1.1" fill="#b4b4b7"/><circle cx="796.8" cy="397.0" r="0.6" fill="#b4b4b7"/><circle cx="798.2" cy="403.8" r="0.5" fill="#b4b4b7"/><circle cx="795.6" cy="391.1" r="0.9" fill="#b4b4b7"/><circle cx="794.5" cy="414.4" r="0.5" fill="#b4b4b7"/><circle cx="792.7" cy="410.8" r="0.9" fill="#b4b4b7"/><circle cx="794.2" cy="403.5" r="1.0" fill="#b4b4b7"/><circle cx="791.5" cy="385.8" r="0.5" fill="#b4b4b7"/><circle cx="791.0" cy="385.1" r="0.6" fill="#b4b4b7"/><circle cx="794.8" cy="406.8" r="1.0" fill="#b4b4b7"/><circle cx="799.0" cy="417.7" r="1.0" fill="#b4b4b7"/><circle cx="794.3" cy="400.3" r="0.8" fill="#b4b4b7"/><circle cx="795.3" cy="396.3" r="1.1" fill="#b4b4b7"/><circle cx="794.9" cy="392.7" r="0.7" fill="#b4b4b7"/><circle cx="794.5" cy="405.2" r="0.9" fill="#b4b4b7"/><circle cx="789.2" cy="383.9" r="1.0" fill="#b4b4b7"/><circle cx="796.0" cy="413.6" r="1.0" fill="#b4b4b7"/><circle cx="793.1" cy="409.2" r="0.7" fill="#b4b4b7"/><circle cx="791.0" cy="388.0" r="0.6" fill="#b4b4b7"/><circle cx="793.3" cy="389.6" r="0.8" fill="#b4b4b7"/><circle cx="796.3" cy="412.2" r="0.8" fill="#b4b4b7"/><circle cx="796.6" cy="403.6" r="1.0" fill="#b4b4b7"/><circle cx="797.1" cy="392.4" r="0.9" fill="#b4b4b7"/><circle cx="799.5" cy="419.4" r="0.5" fill="#b4b4b7"/><circle cx="793.4" cy="388.9" r="1.1" fill="#b4b4b7"/><circle cx="793.5" cy="412.1" r="1.0" fill="#b4b4b7"/><circle cx="796.7" cy="415.9" r="0.6" fill="#b4b4b7"/><circle cx="795.8" cy="392.2" r="1.0" fill="#b4b4b7"/><circle cx="795.7" cy="408.3" r="0.6" fill="#b4b4b7"/>
<circle cx="610.5" cy="318.0" r="0.7" fill="#b4b4b7"/><circle cx="633.6" cy="328.9" r="0.8" fill="#b4b4b7"/><circle cx="617.0" cy="321.7" r="0.5" fill="#b4b4b7"/><circle cx="631.3" cy="323.4" r="1.0" fill="#b4b4b7"/><circle cx="617.9" cy="320.7" r="1.1" fill="#b4b4b7"/><circle cx="623.5" cy="323.3" r="0.9" fill="#b4b4b7"/><circle cx="608.6" cy="318.6" r="0.6" fill="#b4b4b7"/><circle cx="612.3" cy="319.0" r="0.7" fill="#b4b4b7"/><circle cx="613.1" cy="320.0" r="0.6" fill="#b4b4b7"/><circle cx="618.1" cy="320.5" r="0.6" fill="#b4b4b7"/><circle cx="625.3" cy="322.6" r="1.0" fill="#b4b4b7"/><circle cx="634.2" cy="329.2" r="0.6" fill="#b4b4b7"/><circle cx="630.7" cy="324.8" r="0.7" fill="#b4b4b7"/><circle cx="607.3" cy="317.6" r="0.7" fill="#b4b4b7"/><circle cx="615.4" cy="320.4" r="0.6" fill="#b4b4b7"/><circle cx="632.7" cy="323.9" r="0.7" fill="#b4b4b7"/><circle cx="626.3" cy="321.5" r="0.5" fill="#b4b4b7"/><circle cx="634.6" cy="334.1" r="0.6" fill="#b4b4b7"/><circle cx="629.5" cy="324.5" r="0.6" fill="#b4b4b7"/><circle cx="632.9" cy="325.6" r="0.7" fill="#b4b4b7"/><circle cx="631.8" cy="325.3" r="1.0" fill="#b4b4b7"/><circle cx="608.9" cy="318.8" r="0.5" fill="#b4b4b7"/><circle cx="622.7" cy="321.2" r="0.7" fill="#b4b4b7"/><circle cx="608.8" cy="316.7" r="0.7" fill="#b4b4b7"/><circle cx="612.1" cy="320.6" r="1.1" fill="#b4b4b7"/><circle cx="605.3" cy="316.0" r="1.1" fill="#b4b4b7"/><circle cx="636.5" cy="332.1" r="0.6" fill="#b4b4b7"/><circle cx="633.7" cy="326.4" r="1.0" fill="#b4b4b7"/><circle cx="619.5" cy="321.0" r="0.7" fill="#b4b4b7"/><circle cx="609.7" cy="317.5" r="0.7" fill="#b4b4b7"/><circle cx="610.0" cy="317.3" r="0.8" fill="#b4b4b7"/><circle cx="613.2" cy="319.6" r="0.6" fill="#b4b4b7"/><circle cx="637.5" cy="331.9" r="0.6" fill="#b4b4b7"/><circle cx="635.0" cy="330.4" r="1.0" fill="#b4b4b7"/><circle cx="611.6" cy="319.2" r="0.7" fill="#b4b4b7"/><circle cx="628.9" cy="322.7" r="0.6" fill="#b4b4b7"/><circle cx="618.1" cy="320.3" r="0.5" fill="#b4b4b7"/><circle cx="632.0" cy="323.1" r="1.0" fill="#b4b4b7"/><circle cx="634.7" cy="332.8" r="1.0" fill="#b4b4b7"/><circle cx="634.2" cy="331.6" r="0.6" fill="#b4b4b7"/>
<circle cx="339.0" cy="504.3" r="0.5" fill="#b4b4b7"/><circle cx="337.3" cy="506.4" r="1.1" fill="#b4b4b7"/><circle cx="338.8" cy="504.5" r="0.5" fill="#b4b4b7"/><circle cx="338.6" cy="502.0" r="0.9" fill="#b4b4b7"/><circle cx="339.4" cy="503.7" r="0.7" fill="#b4b4b7"/><circle cx="338.0" cy="502.8" r="0.8" fill="#b4b4b7"/><circle cx="339.0" cy="502.8" r="0.9" fill="#b4b4b7"/><circle cx="338.1" cy="504.2" r="1.1" fill="#b4b4b7"/><circle cx="338.8" cy="502.3" r="1.0" fill="#b4b4b7"/><circle cx="340.7" cy="502.9" r="0.7" fill="#b4b4b7"/>
<circle cx="400.4" cy="482.8" r="0.5" fill="#b4b4b7"/><circle cx="404.0" cy="478.4" r="0.7" fill="#b4b4b7"/><circle cx="415.7" cy="478.1" r="0.4" fill="#b4b4b7"/><circle cx="415.5" cy="473.9" r="0.5" fill="#b4b4b7"/><circle cx="398.1" cy="476.7" r="0.3" fill="#b4b4b7"/><circle cx="419.4" cy="482.6" r="0.4" fill="#b4b4b7"/><circle cx="401.0" cy="481.6" r="0.4" fill="#b4b4b7"/><circle cx="424.7" cy="490.9" r="0.5" fill="#b4b4b7"/><circle cx="406.0" cy="479.7" r="0.5" fill="#b4b4b7"/><circle cx="402.1" cy="476.1" r="0.5" fill="#b4b4b7"/><circle cx="419.8" cy="481.8" r="0.7" fill="#b4b4b7"/><circle cx="398.8" cy="482.0" r="0.3" fill="#b4b4b7"/><circle cx="407.7" cy="477.9" r="0.6" fill="#b4b4b7"/><circle cx="409.7" cy="473.4" r="0.5" fill="#b4b4b7"/><circle cx="409.1" cy="472.4" r="0.5" fill="#b4b4b7"/><circle cx="416.4" cy="479.6" r="0.6" fill="#b4b4b7"/><circle cx="403.7" cy="474.9" r="0.4" fill="#b4b4b7"/><circle cx="406.3" cy="477.7" r="0.3" fill="#b4b4b7"/><circle cx="400.5" cy="482.1" r="0.5" fill="#b4b4b7"/><circle cx="399.7" cy="482.7" r="0.6" fill="#b4b4b7"/><circle cx="401.1" cy="482.7" r="0.6" fill="#b4b4b7"/><circle cx="402.1" cy="478.0" r="0.6" fill="#b4b4b7"/><circle cx="405.3" cy="476.4" r="0.6" fill="#b4b4b7"/><circle cx="421.8" cy="490.2" r="0.4" fill="#b4b4b7"/><circle cx="414.9" cy="478.8" r="0.4" fill="#b4b4b7"/><circle cx="408.8" cy="474.5" r="0.4" fill="#b4b4b7"/>
<circle cx="419.6" cy="509.9" r="0.9" fill="#9c9ca2"/><circle cx="406.3" cy="505.1" r="0.5" fill="#9c9ca2"/><circle cx="416.4" cy="507.0" r="0.8" fill="#9c9ca2"/><circle cx="394.3" cy="503.5" r="0.9" fill="#9c9ca2"/><circle cx="415.3" cy="504.6" r="0.7" fill="#9c9ca2"/><circle cx="393.3" cy="503.5" r="0.5" fill="#9c9ca2"/><circle cx="411.9" cy="520.9" r="0.8" fill="#9c9ca2"/><circle cx="394.7" cy="517.1" r="0.6" fill="#9c9ca2"/><circle cx="413.8" cy="505.6" r="0.9" fill="#9c9ca2"/><circle cx="405.7" cy="500.3" r="0.5" fill="#9c9ca2"/><circle cx="407.0" cy="516.7" r="0.6" fill="#9c9ca2"/><circle cx="407.8" cy="516.7" r="0.9" fill="#9c9ca2"/><circle cx="404.4" cy="502.1" r="0.6" fill="#9c9ca2"/><circle cx="390.0" cy="501.4" r="0.6" fill="#9c9ca2"/><circle cx="413.7" cy="509.1" r="0.9" fill="#9c9ca2"/><circle cx="405.9" cy="521.4" r="0.9" fill="#9c9ca2"/><circle cx="398.2" cy="500.8" r="0.5" fill="#9c9ca2"/><circle cx="399.3" cy="505.7" r="0.5" fill="#9c9ca2"/><circle cx="404.0" cy="517.7" r="0.8" fill="#9c9ca2"/><circle cx="397.9" cy="519.2" r="0.6" fill="#9c9ca2"/><circle cx="411.3" cy="506.7" r="0.9" fill="#9c9ca2"/><circle cx="411.4" cy="516.6" r="0.9" fill="#9c9ca2"/><circle cx="417.8" cy="505.5" r="1.0" fill="#9c9ca2"/><circle cx="408.4" cy="502.8" r="0.9" fill="#9c9ca2"/><circle cx="390.9" cy="512.1" r="0.8" fill="#9c9ca2"/><circle cx="399.7" cy="517.4" r="0.6" fill="#9c9ca2"/><circle cx="395.5" cy="512.4" r="0.8" fill="#9c9ca2"/><circle cx="400.8" cy="505.4" r="1.0" fill="#9c9ca2"/><circle cx="390.7" cy="514.6" r="0.8" fill="#9c9ca2"/><circle cx="415.2" cy="517.4" r="0.8" fill="#9c9ca2"/><circle cx="410.7" cy="519.3" r="0.9" fill="#9c9ca2"/><circle cx="412.3" cy="519.3" r="0.9" fill="#9c9ca2"/><circle cx="412.2" cy="516.1" r="0.6" fill="#9c9ca2"/><circle cx="393.7" cy="498.1" r="1.0" fill="#9c9ca2"/><circle cx="398.5" cy="520.2" r="0.8" fill="#9c9ca2"/><circle cx="398.1" cy="521.2" r="0.9" fill="#9c9ca2"/><circle cx="410.4" cy="505.9" r="0.5" fill="#9c9ca2"/><circle cx="389.8" cy="513.2" r="0.6" fill="#9c9ca2"/><circle cx="402.5" cy="505.6" r="0.5" fill="#9c9ca2"/><circle cx="395.5" cy="513.9" r="0.9" fill="#9c9ca2"/><circle cx="398.7" cy="517.6" r="0.5" fill="#9c9ca2"/><circle cx="413.3" cy="508.5" r="1.0" fill="#9c9ca2"/><circle cx="410.4" cy="518.8" r="0.5" fill="#9c9ca2"/><circle cx="417.0" cy="504.5" r="0.7" fill="#9c9ca2"/><circle cx="394.3" cy="504.7" r="0.5" fill="#9c9ca2"/><circle cx="407.7" cy="501.6" r="0.9" fill="#9c9ca2"/><circle cx="392.0" cy="500.0" r="0.9" fill="#9c9ca2"/><circle cx="410.3" cy="506.2" r="0.8" fill="#9c9ca2"/><circle cx="401.2" cy="516.9" r="0.8" fill="#9c9ca2"/><circle cx="419.6" cy="510.5" r="0.7" fill="#9c9ca2"/><circle cx="393.6" cy="515.5" r="0.5" fill="#9c9ca2"/><circle cx="416.0" cy="515.4" r="0.8" fill="#9c9ca2"/><circle cx="409.8" cy="506.6" r="0.8" fill="#9c9ca2"/><circle cx="415.0" cy="519.9" r="0.6" fill="#9c9ca2"/><circle cx="406.7" cy="519.5" r="0.7" fill="#9c9ca2"/><circle cx="416.2" cy="504.7" r="0.8" fill="#9c9ca2"/><circle cx="410.8" cy="505.6" r="0.8" fill="#9c9ca2"/><circle cx="404.3" cy="505.0" r="0.8" fill="#9c9ca2"/><circle cx="413.5" cy="506.6" r="0.6" fill="#9c9ca2"/><circle cx="411.3" cy="503.7" r="0.7" fill="#9c9ca2"/>
<g clip-path="url(#blc)">
<circle cx="327.5" cy="415.5" r="4.9" fill="#4f4763" stroke="#6b657b" stroke-width="0.8" opacity="0.6"/>
<circle cx="330.6" cy="394.2" r="3.3" fill="#4f4763" stroke="#6b657b" stroke-width="0.8" opacity="0.6"/>
<circle cx="337.6" cy="374.5" r="4.7" fill="#4f4763" stroke="#6b657b" stroke-width="0.8" opacity="0.6"/>
<circle cx="328.8" cy="394.6" r="3.2" fill="#4f4763" stroke="#6b657b" stroke-width="0.8" opacity="0.6"/>
<circle cx="316.9" cy="359.4" r="3.6" fill="#4f4763" stroke="#6b657b" stroke-width="0.8" opacity="0.6"/>
<circle cx="343.6" cy="366.0" r="2.6" fill="#4f4763" stroke="#6b657b" stroke-width="0.8" opacity="0.6"/>
<circle cx="338.3" cy="361.4" r="3.2" fill="#4f4763" stroke="#6b657b" stroke-width="0.8" opacity="0.6"/>
<circle cx="401.0" cy="407.4" r="3.1" fill="#4f4763" stroke="#6b657b" stroke-width="0.8" opacity="0.6"/>
<circle cx="402.8" cy="405.5" r="5.0" fill="#4f4763" stroke="#6b657b" stroke-width="0.8" opacity="0.6"/>
<circle cx="400.2" cy="364.8" r="3.5" fill="#4f4763" stroke="#6b657b" stroke-width="0.8" opacity="0.6"/>
<circle cx="406.3" cy="360.2" r="3.3" fill="#4f4763" stroke="#6b657b" stroke-width="0.8" opacity="0.6"/>
<circle cx="428.5" cy="376.6" r="4.8" fill="#4f4763" stroke="#6b657b" stroke-width="0.8" opacity="0.6"/>
<circle cx="433.9" cy="394.3" r="4.1" fill="#4f4763" stroke="#6b657b" stroke-width="0.8" opacity="0.6"/>
<circle cx="410.1" cy="351.4" r="4.2" fill="#4f4763" stroke="#6b657b" stroke-width="0.8" opacity="0.6"/>
<circle cx="424.7" cy="355.3" r="5.0" fill="#4f4763" stroke="#6b657b" stroke-width="0.8" opacity="0.6"/>
<circle cx="433.3" cy="378.8" r="4.5" fill="#4f4763" stroke="#6b657b" stroke-width="0.8" opacity="0.6"/>
<circle cx="477.6" cy="364.0" r="4.8" fill="#4f4763" stroke="#6b657b" stroke-width="0.8" opacity="0.6"/>
<circle cx="497.7" cy="374.9" r="2.8" fill="#4f4763" stroke="#6b657b" stroke-width="0.8" opacity="0.6"/>
<circle cx="496.8" cy="351.5" r="4.5" fill="#4f4763" stroke="#6b657b" stroke-width="0.8" opacity="0.6"/>
<circle cx="484.4" cy="328.9" r="4.8" fill="#4f4763" stroke="#6b657b" stroke-width="0.8" opacity="0.6"/>
<circle cx="478.0" cy="353.9" r="3.8" fill="#4f4763" stroke="#6b657b" stroke-width="0.8" opacity="0.6"/>
<circle cx="497.0" cy="368.9" r="4.6" fill="#4f4763" stroke="#6b657b" stroke-width="0.8" opacity="0.6"/>
<circle cx="478.8" cy="365.5" r="4.8" fill="#4f4763" stroke="#6b657b" stroke-width="0.8" opacity="0.6"/>
<circle cx="489.7" cy="347.8" r="4.0" fill="#4f4763" stroke="#6b657b" stroke-width="0.8" opacity="0.6"/>
<circle cx="592.9" cy="332.4" r="4.3" fill="#4f4763" stroke="#6b657b" stroke-width="0.8" opacity="0.6"/>
<circle cx="578.1" cy="341.9" r="3.6" fill="#4f4763" stroke="#6b657b" stroke-width="0.8" opacity="0.6"/>
<circle cx="620.6" cy="341.8" r="3.5" fill="#4f4763" stroke="#6b657b" stroke-width="0.8" opacity="0.6"/>
<circle cx="589.1" cy="336.8" r="4.4" fill="#4f4763" stroke="#6b657b" stroke-width="0.8" opacity="0.6"/>
<circle cx="624.4" cy="341.6" r="3.8" fill="#4f4763" stroke="#6b657b" stroke-width="0.8" opacity="0.6"/>
<circle cx="594.5" cy="332.7" r="3.6" fill="#4f4763" stroke="#6b657b" stroke-width="0.8" opacity="0.6"/>
<circle cx="586.0" cy="351.3" r="3.3" fill="#4f4763" stroke="#6b657b" stroke-width="0.8" opacity="0.6"/>
<circle cx="580.8" cy="355.0" r="5.0" fill="#4f4763" stroke="#6b657b" stroke-width="0.8" opacity="0.6"/>
<circle cx="606.0" cy="332.1" r="3.8" fill="#4f4763" stroke="#6b657b" stroke-width="0.8" opacity="0.6"/>
<circle cx="601.0" cy="336.4" r="4.1" fill="#4f4763" stroke="#6b657b" stroke-width="0.8" opacity="0.6"/>
<circle cx="625.8" cy="413.3" r="4.3" fill="#4f4763" stroke="#6b657b" stroke-width="0.8" opacity="0.6"/>
<circle cx="626.0" cy="412.6" r="2.6" fill="#4f4763" stroke="#6b657b" stroke-width="0.8" opacity="0.6"/>
<circle cx="616.0" cy="408.7" r="4.2" fill="#4f4763" stroke="#6b657b" stroke-width="0.8" opacity="0.6"/>
<circle cx="683.8" cy="337.5" r="3.7" fill="#4f4763" stroke="#6b657b" stroke-width="0.8" opacity="0.6"/>
<circle cx="691.7" cy="342.5" r="2.6" fill="#4f4763" stroke="#6b657b" stroke-width="0.8" opacity="0.6"/>
<circle cx="689.4" cy="362.4" r="4.0" fill="#4f4763" stroke="#6b657b" stroke-width="0.8" opacity="0.6"/>
<circle cx="682.2" cy="334.6" r="4.4" fill="#4f4763" stroke="#6b657b" stroke-width="0.8" opacity="0.6"/>
<circle cx="771.7" cy="394.4" r="4.2" fill="#4f4763" stroke="#6b657b" stroke-width="0.8" opacity="0.6"/>
<circle cx="792.5" cy="340.8" r="2.7" fill="#4f4763" stroke="#6b657b" stroke-width="0.8" opacity="0.6"/>
<circle cx="784.0" cy="340.8" r="4.9" fill="#4f4763" stroke="#6b657b" stroke-width="0.8" opacity="0.6"/>
<circle cx="773.9" cy="341.7" r="4.9" fill="#4f4763" stroke="#6b657b" stroke-width="0.8" opacity="0.6"/>
<circle cx="792.5" cy="395.3" r="4.5" fill="#4f4763" stroke="#6b657b" stroke-width="0.8" opacity="0.6"/>
<circle cx="756.8" cy="372.1" r="3.3" fill="#4f4763" stroke="#6b657b" stroke-width="0.8" opacity="0.6"/>
<circle cx="776.1" cy="346.1" r="4.1" fill="#4f4763" stroke="#6b657b" stroke-width="0.8" opacity="0.6"/>
<circle cx="775.0" cy="357.3" r="4.6" fill="#4f4763" stroke="#6b657b" stroke-width="0.8" opacity="0.6"/>
<circle cx="756.1" cy="345.0" r="3.5" fill="#4f4763" stroke="#6b657b" stroke-width="0.8" opacity="0.6"/>
<circle cx="762.2" cy="392.2" r="3.7" fill="#4f4763" stroke="#6b657b" stroke-width="0.8" opacity="0.6"/>
<circle cx="771.7" cy="348.1" r="3.0" fill="#4f4763" stroke="#6b657b" stroke-width="0.8" opacity="0.6"/>
<circle cx="873.0" cy="366.9" r="4.3" fill="#4f4763" stroke="#6b657b" stroke-width="0.8" opacity="0.6"/>
<circle cx="889.4" cy="353.7" r="3.5" fill="#4f4763" stroke="#6b657b" stroke-width="0.8" opacity="0.6"/>
<circle cx="860.8" cy="357.2" r="2.8" fill="#4f4763" stroke="#6b657b" stroke-width="0.8" opacity="0.6"/>
<circle cx="863.5" cy="370.2" r="4.6" fill="#4f4763" stroke="#6b657b" stroke-width="0.8" opacity="0.6"/>
<circle cx="869.0" cy="374.6" r="3.1" fill="#4f4763" stroke="#6b657b" stroke-width="0.8" opacity="0.6"/>
<circle cx="891.9" cy="372.5" r="4.0" fill="#4f4763" stroke="#6b657b" stroke-width="0.8" opacity="0.6"/>
<circle cx="868.9" cy="362.7" r="2.7" fill="#4f4763" stroke="#6b657b" stroke-width="0.8" opacity="0.6"/>
<circle cx="872.4" cy="425.8" r="3.1" fill="#4f4763" stroke="#6b657b" stroke-width="0.8" opacity="0.6"/>
<circle cx="885.3" cy="411.8" r="3.7" fill="#4f4763" stroke="#6b657b" stroke-width="0.8" opacity="0.6"/>
<circle cx="861.4" cy="408.8" r="4.6" fill="#4f4763" stroke="#6b657b" stroke-width="0.8" opacity="0.6"/>
<circle cx="862.6" cy="428.5" r="2.7" fill="#4f4763" stroke="#6b657b" stroke-width="0.8" opacity="0.6"/>
<circle cx="343.5" cy="529.1" r="3.4" fill="#4f4763" stroke="#6b657b" stroke-width="0.8" opacity="0.6"/>
<circle cx="336.1" cy="548.4" r="3.2" fill="#4f4763" stroke="#6b657b" stroke-width="0.8" opacity="0.6"/>
<circle cx="341.7" cy="539.0" r="4.8" fill="#4f4763" stroke="#6b657b" stroke-width="0.8" opacity="0.6"/>
<circle cx="321.1" cy="535.6" r="2.6" fill="#4f4763" stroke="#6b657b" stroke-width="0.8" opacity="0.6"/>
<circle cx="384.9" cy="497.6" r="3.5" fill="#4f4763" stroke="#6b657b" stroke-width="0.8" opacity="0.6"/>
<circle cx="384.4" cy="509.7" r="4.5" fill="#4f4763" stroke="#6b657b" stroke-width="0.8" opacity="0.6"/>
<circle cx="406.9" cy="497.7" r="4.8" fill="#4f4763" stroke="#6b657b" stroke-width="0.8" opacity="0.6"/>
<circle cx="467.9" cy="519.6" r="2.7" fill="#4f4763" stroke="#6b657b" stroke-width="0.8" opacity="0.6"/>
<circle cx="467.2" cy="540.7" r="3.2" fill="#4f4763" stroke="#6b657b" stroke-width="0.8" opacity="0.6"/>
<circle cx="457.7" cy="537.2" r="4.4" fill="#4f4763" stroke="#6b657b" stroke-width="0.8" opacity="0.6"/>
<circle cx="456.7" cy="540.4" r="2.7" fill="#4f4763" stroke="#6b657b" stroke-width="0.8" opacity="0.6"/>
<circle cx="459.0" cy="538.1" r="3.0" fill="#4f4763" stroke="#6b657b" stroke-width="0.8" opacity="0.6"/>
<circle cx="435.2" cy="517.3" r="4.4" fill="#4f4763" stroke="#6b657b" stroke-width="0.8" opacity="0.6"/>
<circle cx="548.5" cy="489.1" r="3.2" fill="#4f4763" stroke="#6b657b" stroke-width="0.8" opacity="0.6"/>
<circle cx="534.0" cy="509.7" r="3.0" fill="#4f4763" stroke="#6b657b" stroke-width="0.8" opacity="0.6"/>
<circle cx="546.9" cy="463.9" r="4.1" fill="#4f4763" stroke="#6b657b" stroke-width="0.8" opacity="0.6"/>
<circle cx="539.6" cy="461.5" r="3.5" fill="#4f4763" stroke="#6b657b" stroke-width="0.8" opacity="0.6"/>
<circle cx="547.7" cy="496.9" r="3.0" fill="#4f4763" stroke="#6b657b" stroke-width="0.8" opacity="0.6"/>
<circle cx="542.8" cy="475.2" r="3.0" fill="#4f4763" stroke="#6b657b" stroke-width="0.8" opacity="0.6"/>
<circle cx="533.6" cy="480.9" r="4.2" fill="#4f4763" stroke="#6b657b" stroke-width="0.8" opacity="0.6"/>
<circle cx="525.7" cy="483.8" r="2.6" fill="#4f4763" stroke="#6b657b" stroke-width="0.8" opacity="0.6"/>
<circle cx="519.0" cy="490.6" r="4.1" fill="#4f4763" stroke="#6b657b" stroke-width="0.8" opacity="0.6"/>
<circle cx="540.5" cy="489.3" r="4.4" fill="#4f4763" stroke="#6b657b" stroke-width="0.8" opacity="0.6"/>
<circle cx="547.1" cy="510.7" r="4.0" fill="#4f4763" stroke="#6b657b" stroke-width="0.8" opacity="0.6"/>
<circle cx="545.6" cy="499.6" r="4.6" fill="#4f4763" stroke="#6b657b" stroke-width="0.8" opacity="0.6"/>
<circle cx="646.1" cy="502.6" r="4.4" fill="#4f4763" stroke="#6b657b" stroke-width="0.8" opacity="0.6"/>
<circle cx="655.8" cy="500.0" r="4.6" fill="#4f4763" stroke="#6b657b" stroke-width="0.8" opacity="0.6"/>
<circle cx="626.6" cy="497.7" r="3.7" fill="#4f4763" stroke="#6b657b" stroke-width="0.8" opacity="0.6"/>
<circle cx="632.2" cy="516.4" r="3.3" fill="#4f4763" stroke="#6b657b" stroke-width="0.8" opacity="0.6"/>
<circle cx="639.5" cy="530.6" r="3.6" fill="#4f4763" stroke="#6b657b" stroke-width="0.8" opacity="0.6"/>
<circle cx="621.6" cy="498.9" r="4.9" fill="#4f4763" stroke="#6b657b" stroke-width="0.8" opacity="0.6"/>
<circle cx="765.7" cy="510.6" r="4.6" fill="#4f4763" stroke="#6b657b" stroke-width="0.8" opacity="0.6"/>
<circle cx="765.0" cy="525.2" r="4.7" fill="#4f4763" stroke="#6b657b" stroke-width="0.8" opacity="0.6"/>
<circle cx="742.8" cy="499.1" r="3.0" fill="#4f4763" stroke="#6b657b" stroke-width="0.8" opacity="0.6"/>
<circle cx="724.2" cy="484.9" r="2.8" fill="#4f4763" stroke="#6b657b" stroke-width="0.8" opacity="0.6"/>
<circle cx="753.4" cy="510.4" r="2.7" fill="#4f4763" stroke="#6b657b" stroke-width="0.8" opacity="0.6"/>
<circle cx="761.6" cy="515.8" r="2.7" fill="#4f4763" stroke="#6b657b" stroke-width="0.8" opacity="0.6"/>
<circle cx="715.8" cy="488.3" r="3.8" fill="#4f4763" stroke="#6b657b" stroke-width="0.8" opacity="0.6"/>
<circle cx="744.5" cy="478.8" r="3.7" fill="#4f4763" stroke="#6b657b" stroke-width="0.8" opacity="0.6"/>
<circle cx="742.1" cy="493.2" r="3.9" fill="#4f4763" stroke="#6b657b" stroke-width="0.8" opacity="0.6"/>
<circle cx="723.1" cy="528.0" r="3.7" fill="#4f4763" stroke="#6b657b" stroke-width="0.8" opacity="0.6"/>
<circle cx="751.1" cy="498.2" r="3.1" fill="#4f4763" stroke="#6b657b" stroke-width="0.8" opacity="0.6"/>
<circle cx="710.4" cy="496.0" r="4.8" fill="#4f4763" stroke="#6b657b" stroke-width="0.8" opacity="0.6"/>
<circle cx="767.0" cy="532.7" r="3.4" fill="#4f4763" stroke="#6b657b" stroke-width="0.8" opacity="0.6"/>
<circle cx="742.8" cy="535.3" r="2.7" fill="#4f4763" stroke="#6b657b" stroke-width="0.8" opacity="0.6"/>
<circle cx="868.6" cy="528.7" r="4.6" fill="#4f4763" stroke="#6b657b" stroke-width="0.8" opacity="0.6"/>
<circle cx="854.6" cy="515.3" r="3.9" fill="#4f4763" stroke="#6b657b" stroke-width="0.8" opacity="0.6"/>
<circle cx="876.2" cy="495.4" r="3.4" fill="#4f4763" stroke="#6b657b" stroke-width="0.8" opacity="0.6"/>
<circle cx="883.2" cy="507.9" r="3.4" fill="#4f4763" stroke="#6b657b" stroke-width="0.8" opacity="0.6"/>
<circle cx="334.9" cy="385.7" r="0.9" fill="#7c3f66"/>
<circle cx="323.8" cy="395.0" r="0.8" fill="#261e38"/>
<circle cx="314.8" cy="390.6" r="0.8" fill="#261e38"/>
<circle cx="336.9" cy="387.8" r="0.8" fill="#7c3f66"/>
<circle cx="326.3" cy="413.0" r="1.1" fill="#7c3f66"/>
<circle cx="309.7" cy="364.6" r="1.1" fill="#7c3f66"/>
<circle cx="340.0" cy="370.8" r="0.9" fill="#7c3f66"/>
<circle cx="322.8" cy="376.2" r="0.9" fill="#261e38"/>
<circle cx="350.6" cy="389.4" r="1.1" fill="#7c3f66"/>
<circle cx="418.1" cy="409.0" r="0.8" fill="#261e38"/>
<circle cx="408.5" cy="382.8" r="1.0" fill="#7c3f66"/>
<circle cx="420.6" cy="401.9" r="1.0" fill="#261e38"/>
<circle cx="420.5" cy="385.3" r="1.0" fill="#261e38"/>
<circle cx="393.9" cy="401.9" r="1.1" fill="#261e38"/>
<circle cx="415.3" cy="355.7" r="1.0" fill="#7c3f66"/>
<circle cx="416.2" cy="367.9" r="1.1" fill="#7c3f66"/>
<circle cx="418.0" cy="364.8" r="1.0" fill="#7c3f66"/>
<circle cx="483.3" cy="355.0" r="0.9" fill="#261e38"/>
<circle cx="484.3" cy="381.6" r="0.9" fill="#7c3f66"/>
<circle cx="500.6" cy="368.6" r="1.1" fill="#7c3f66"/>
<circle cx="495.1" cy="380.0" r="1.1" fill="#7c3f66"/>
<circle cx="493.6" cy="371.1" r="1.0" fill="#261e38"/>
<circle cx="601.1" cy="347.4" r="1.0" fill="#7c3f66"/>
<circle cx="598.1" cy="323.9" r="0.8" fill="#261e38"/>
<circle cx="603.5" cy="348.6" r="0.9" fill="#7c3f66"/>
<circle cx="603.8" cy="340.4" r="0.9" fill="#261e38"/>
<circle cx="576.1" cy="336.8" r="1.0" fill="#7c3f66"/>
<circle cx="600.8" cy="346.1" r="0.9" fill="#261e38"/>
<circle cx="594.9" cy="334.6" r="1.1" fill="#7c3f66"/>
<circle cx="585.7" cy="348.1" r="1.1" fill="#7c3f66"/>
<circle cx="614.3" cy="413.0" r="1.2" fill="#7c3f66"/>
<circle cx="614.1" cy="419.4" r="0.7" fill="#261e38"/>
<circle cx="605.4" cy="412.6" r="0.9" fill="#261e38"/>
<circle cx="599.4" cy="415.1" r="1.0" fill="#7c3f66"/>
<circle cx="668.8" cy="339.5" r="0.9" fill="#7c3f66"/>
<circle cx="674.5" cy="332.0" r="0.8" fill="#261e38"/>
<circle cx="669.9" cy="358.6" r="0.8" fill="#261e38"/>
<circle cx="795.4" cy="381.7" r="1.1" fill="#7c3f66"/>
<circle cx="767.7" cy="379.8" r="1.3" fill="#7c3f66"/>
<circle cx="764.3" cy="336.8" r="1.2" fill="#7c3f66"/>
<circle cx="792.4" cy="349.8" r="0.9" fill="#7c3f66"/>
<circle cx="789.3" cy="398.0" r="0.8" fill="#261e38"/>
<circle cx="795.1" cy="361.2" r="1.2" fill="#7c3f66"/>
<circle cx="761.1" cy="366.9" r="1.0" fill="#7c3f66"/>
<circle cx="860.8" cy="374.9" r="1.3" fill="#7c3f66"/>
<circle cx="862.9" cy="376.8" r="0.8" fill="#261e38"/>
<circle cx="887.7" cy="354.3" r="0.8" fill="#261e38"/>
<circle cx="887.0" cy="407.3" r="0.9" fill="#7c3f66"/>
<circle cx="887.9" cy="416.7" r="1.0" fill="#7c3f66"/>
<circle cx="888.6" cy="402.8" r="1.0" fill="#261e38"/>
<circle cx="328.4" cy="539.7" r="0.9" fill="#261e38"/>
<circle cx="326.3" cy="529.5" r="1.1" fill="#261e38"/>
<circle cx="327.0" cy="545.3" r="1.2" fill="#7c3f66"/>
<circle cx="396.4" cy="515.5" r="1.0" fill="#7c3f66"/>
<circle cx="393.5" cy="499.9" r="0.7" fill="#261e38"/>
<circle cx="443.6" cy="516.7" r="1.2" fill="#7c3f66"/>
<circle cx="455.2" cy="542.7" r="0.9" fill="#261e38"/>
<circle cx="443.0" cy="521.3" r="0.8" fill="#261e38"/>
<circle cx="437.2" cy="525.3" r="1.3" fill="#7c3f66"/>
<circle cx="516.4" cy="499.7" r="1.0" fill="#7c3f66"/>
<circle cx="512.8" cy="475.4" r="1.0" fill="#261e38"/>
<circle cx="526.5" cy="473.1" r="1.1" fill="#261e38"/>
<circle cx="539.7" cy="491.8" r="1.1" fill="#7c3f66"/>
<circle cx="541.7" cy="479.7" r="1.1" fill="#261e38"/>
<circle cx="655.6" cy="497.8" r="0.9" fill="#261e38"/>
<circle cx="630.9" cy="512.1" r="0.8" fill="#261e38"/>
<circle cx="637.0" cy="517.8" r="0.9" fill="#7c3f66"/>
<circle cx="630.1" cy="526.9" r="0.7" fill="#261e38"/>
<circle cx="619.1" cy="514.1" r="0.9" fill="#7c3f66"/>
<circle cx="654.3" cy="527.7" r="0.9" fill="#7c3f66"/>
<circle cx="642.4" cy="508.0" r="1.1" fill="#7c3f66"/>
<circle cx="739.8" cy="476.7" r="1.3" fill="#7c3f66"/>
<circle cx="738.3" cy="521.2" r="1.0" fill="#7c3f66"/>
<circle cx="740.7" cy="516.3" r="0.9" fill="#7c3f66"/>
<circle cx="729.2" cy="513.7" r="0.9" fill="#261e38"/>
<circle cx="784.3" cy="514.8" r="0.7" fill="#261e38"/>
<circle cx="765.5" cy="487.8" r="0.9" fill="#261e38"/>
<circle cx="782.9" cy="497.3" r="0.7" fill="#261e38"/>
<circle cx="774.8" cy="484.7" r="0.9" fill="#7c3f66"/>
<circle cx="772.4" cy="508.2" r="1.0" fill="#7c3f66"/>
<circle cx="733.9" cy="488.0" r="0.8" fill="#261e38"/>
<circle cx="863.8" cy="495.1" r="1.0" fill="#261e38"/>
<circle cx="877.5" cy="505.7" r="0.9" fill="#7c3f66"/>
<circle cx="885.0" cy="524.4" r="1.1" fill="#261e38"/>
<circle cx="859.7" cy="529.8" r="1.2" fill="#7c3f66"/>
<circle cx="874.3" cy="520.6" r="0.8" fill="#261e38"/>
<circle cx="870.1" cy="502.2" r="0.9" fill="#7c3f66"/>
<circle cx="850.6" cy="524.5" r="1.1" fill="#7c3f66"/>
<circle cx="887.0" cy="512.3" r="0.9" fill="#261e38"/>
<circle cx="856.2" cy="527.2" r="0.9" fill="#261e38"/>
<circle cx="853.5" cy="518.6" r="0.8" fill="#261e38"/>
</g>
<circle cx="323" cy="481" r="3.0" fill="#a6a6aa"/>
<circle cx="337" cy="507" r="2.2" fill="#a6a6aa"/>
<circle cx="339" cy="503" r="1.5" fill="#a6a6aa"/>
<circle cx="422" cy="485" r="1.5" fill="#a6a6aa"/>
<circle cx="425" cy="489" r="1.2" fill="#a6a6aa"/>
<circle cx="413" cy="488" r="0.9" fill="#a6a6aa"/>
<circle cx="406" cy="481" r="0.8" fill="#a6a6aa"/>
<circle cx="400" cy="489" r="0.8" fill="#a6a6aa"/>
<circle cx="396" cy="476" r="0.7" fill="#a6a6aa"/>
<circle cx="411" cy="472" r="0.7" fill="#a6a6aa"/>
<circle cx="880" cy="326" r="1.3" fill="#a6a6aa"/>
<circle cx="878" cy="329" r="1.0" fill="#a6a6aa"/>
</g>
<path d="M1006 280.500H217.500V592.500H1006" fill="none" stroke="#000" stroke-width="1.100"/>
<path d="M1006 280.500H217.500V592.500H1006" fill="none" stroke="#f4f02c" stroke-width="1.100" stroke-dasharray="4 4" stroke-dashoffset="-1"/>
</svg>
</div>
<!-- zoom-on-resize button -->
<svg style="left:1007px;top:63px" width="13" height="13" viewBox="0 0 13 13"><rect width="12.5" height="12.5" fill="#bdbdbd"/><circle cx="6" cy="6" r="4.2" fill="#8a8a8a" stroke="#4a4a4a" stroke-width="1.6"/><path d="M9 9l3 3" stroke="#4a4a4a" stroke-width="1.8"/></svg>
<!-- vertical scrollbar -->
<div style="left:1005px;top:79px;width:15px;height:731px;background:#2a2a2a;border-radius:2px"></div>
<div style="left:1006.5px;top:80.5px;width:12px;height:728px;background:#5d5d5d;border-radius:1.5px"></div>
<!-- horizontal scrollbar -->
<div style="left:201px;top:811px;width:804px;height:15px;background:#2a2a2a;border-radius:2px"></div>
<div style="left:202.5px;top:812.5px;width:801px;height:12px;background:#5d5d5d;border-radius:1.5px"></div>
<!-- quick mask -->
<svg style="left:185px;top:813px" width="13" height="13" viewBox="0 0 13 13"><rect x="0.5" y="0.5" width="11.5" height="11.5" fill="#5c5c5c" stroke="#c8c8c8" stroke-width="1" stroke-dasharray="1 1"/></svg>
<!-- nav arrow -->
<svg style="left:1005px;top:811px" width="18" height="17" viewBox="0 0 18 17"><path d="M9 0.3L17.2 16 9 11.8 0.8 16z" fill="#c8c8c8"/></svg>
<!-- status bar -->
<div style="left:281px;top:829px;width:42px;height:24px;background:#2b2b2b;border:1px solid #1e1e1e;border-radius:3px 3px 0 0"></div>
<span class="t" style="left:287.800px;top:834.500px;font-size:11.800px;color:#e6e6e6">px</span>
<svg style="left:305px;top:836px" width="14" height="9" viewBox="0 0 14 9"><path d="M1.2 1.3L7 7.3 12.8 1.3" fill="none" stroke="#e6e6e6" stroke-width="1.5"/></svg>
<div style="left:323.500px;top:829.300px;width:35px;height:24px;background:#2e2e2e"></div>
<div style="left:325.500px;top:836.500px;width:30.500px;height:9px;background:#1e1e1e"></div>
<span class="t" style="left:326px;top:836.600px;font-size:9.700px;color:#e6e6e6;letter-spacing:0.750px">3.12%</span>
<div style="left:358px;top:829px;width:16px;height:24px;background:#2b2b2b;border:1px solid #1e1e1e;border-radius:3px 3px 0 0"></div>
<svg style="left:360px;top:836px" width="12" height="9" viewBox="0 0 12 9"><path d="M1 1.3L6 7 11 1.3" fill="none" stroke="#e6e6e6" stroke-width="1.5"/></svg>
<span class="t" style="left:376px;top:834.900px;font-size:11.500px;letter-spacing:0.340px;color:#e6e6e6">2P241018012A2.tif (4.2 GB)</span>
<!-- /CENTER -->

<!-- RIGHT-PANEL -->
<!-- dock 1 tabs -->
<div style="left:1027px;top:26px;width:137.500px;height:20.500px;background:#222"></div>
<div style="left:1051px;top:26px;width:1px;height:20px;background:#3a3a3a"></div>
<div style="left:1075.500px;top:26px;width:1px;height:20px;background:#3a3a3a"></div>
<div style="left:1099.500px;top:26px;width:1px;height:20px;background:#3a3a3a"></div>
<div style="left:1121px;top:26px;width:1px;height:20px;background:#3a3a3a"></div>
<div style="left:1143px;top:26px;width:1px;height:20px;background:#3a3a3a"></div>
<div style="left:1027px;top:46.500px;width:225px;height:520px;background:#3b3b3b;border-top:1px solid #555;border-left:1px solid #555;border-bottom:1px solid #555"></div>
<div style="left:1164.500px;top:23.500px;width:23.500px;height:24px;background:#3b3b3b;border:1px solid #555;border-bottom:none"></div>
<svg style="left:1030px;top:27px" width="18" height="18" viewBox="0 0 18 18"><rect x="0.500" y="0.500" width="17" height="17" fill="#fff" stroke="#000"/><rect x="8" y="8" width="1.200" height="1.200" fill="#000"/></svg>
<svg style="left:1054px;top:27px" width="18" height="18" viewBox="0 0 18 18"><rect x="0.500" y="0.500" width="17" height="17" fill="#f9b65c" stroke="#000"/><path d="M4 1v16M7 1v16M12.500 1v16M15 1v16" stroke="#f4a443" stroke-width="1"/><path d="M9.500 1v16" stroke="#fcc77c" stroke-width="1.500"/><circle cx="9" cy="6" r="1" fill="#f08a3a"/></svg>
<svg style="left:1078px;top:27px" width="18" height="18" viewBox="0 0 18 18"><rect x="0.500" y="0.500" width="17" height="17" fill="#fff" stroke="#000"/><text x="9" y="12.800" font-size="11.500" text-anchor="middle" fill="#000" font-family="Liberation Sans, sans-serif">Aa</text></svg>
<svg style="left:1106px;top:28px" width="8" height="16" viewBox="0 0 8 16"><rect x="0.500" y="0.500" width="7" height="15" fill="#c9b8e8" stroke="#000"/><path d="M2.500 1v14M5.500 1v14" stroke="#8a63c9" stroke-width="1" stroke-dasharray="2 1"/><path d="M4 1v14" stroke="#eee6fa" stroke-width="0.800"/></svg>
<svg style="left:1123px;top:28px" width="18" height="17" viewBox="0 0 18 17"><path d="M9 0.300L17.200 16 9 11.800 0.800 16z" fill="#c0c0c0"/></svg>
<svg style="left:1145px;top:27px" width="17" height="17" viewBox="0 0 17 17" shape-rendering="crispEdges"><rect x="2" y="2" width="13" height="13" fill="#555"/><path d="M0 0h1v1h-1zM0 16h1v1h-1zM2 0h1v1h-1zM2 16h1v1h-1zM0 2h1v1h-1zM16 2h1v1h-1zM4 0h1v1h-1zM4 16h1v1h-1zM0 4h1v1h-1zM16 4h1v1h-1zM6 0h1v1h-1zM6 16h1v1h-1zM0 6h1v1h-1zM16 6h1v1h-1zM8 0h1v1h-1zM8 16h1v1h-1zM0 8h1v1h-1zM16 8h1v1h-1zM10 0h1v1h-1zM10 16h1v1h-1zM0 10h1v1h-1zM16 10h1v1h-1zM12 0h1v1h-1zM12 16h1v1h-1zM0 12h1v1h-1zM16 12h1v1h-1zM14 0h1v1h-1zM14 16h1v1h-1zM0 14h1v1h-1zM16 14h1v1h-1zM16 0h1v1h-1zM16 16h1v1h-1z" fill="#f0f0f0"/></svg>
<svg style="left:1167px;top:26.500px" width="18" height="18" viewBox="0 0 18 18"><path d="M17 1c-1.300 3.700-4.400 9-7.400 12.600l-1.800-1.200C10.800 7.600 13.800 3.800 17 1z" fill="#bebebe"/><path d="M7.200 13l2 1.400c.7 2.200-1.800 3.500-4.500 3.500-1.600 0-3-.2-3.900-.7 2.300-.3 3.100-1 3.600-2.200.5-1.300 1.400-2.200 2.800-2z" fill="#bebebe"/></svg>
<svg style="left:1237px;top:29.500px" width="11" height="11" viewBox="0 0 11 11"><rect x="0.600" y="0.600" width="9.800" height="9.800" fill="none" stroke="#d0d0d0" stroke-width="1.100"/><path d="M8 2.600v5.800L3 5.500z" fill="#c8c8c8"/></svg>
<!-- brush name + preview -->
<div style="left:1031px;top:51px;width:217.500px;height:14px;background:#212121"></div>
<span class="t" style="left:1033px;top:52.500px;font-size:10.300px;color:#e6e6e6">Pixel (1x1 square)</span>
<div style="left:1030px;top:69px;width:219.500px;height:371px;background:#fff"></div>
<div style="left:1139px;top:254px;width:1px;height:1px;background:#000"></div>
<!-- shape -->
<span class="t" style="left:1029.300px;top:449.200px;font-size:10.300px;color:#a8a8a8;letter-spacing:0.200px;-webkit-text-stroke:0.250px #a8a8a8">Shape:</span>
<div style="left:1065.200px;top:442.200px;width:25.600px;height:25.400px;background:#2c2c2c;border:1px solid #1c1c1c;border-radius:3.500px"></div>
<svg style="left:1070px;top:447px" width="70" height="16" viewBox="0 0 70 16"><defs><pattern id="ck" width="2" height="2" patternUnits="userSpaceOnUse"><rect width="2" height="2" fill="#d8d8d8"/><rect width="1" height="1" fill="#f6f6f6"/><rect x="1" y="1" width="1" height="1" fill="#f6f6f6"/><rect x="1" width="1" height="1" fill="#b4b4b4"/><rect y="1" width="1" height="1" fill="#b4b4b4"/></pattern></defs><circle cx="8" cy="8" r="6.200" fill="url(#ck)"/><rect x="27.800" y="1.800" width="12.500" height="12.500" fill="url(#ck)"/><path d="M60 1l7 7-7 7-7-7z" fill="url(#ck)"/></svg>
<div style="left:1029.500px;top:471px;width:219px;height:12.500px;background:#383838;border:1px solid #424242"></div>
<span class="t" style="left:1031.500px;top:472.5px;font-size:10.300px;color:#4c4c4c">Radius</span>
<span class="t" style="right:18.5px;top:472.5px;font-size:10.300px;color:#4c4c4c">0.1</span>
<svg style="left:1238px;top:472.5px" width="9" height="10" viewBox="0 0 9 10"><path d="M1.200 4L4.500 1.200 7.800 4M1.200 6L4.500 8.800 7.800 6" fill="none" stroke="#545454" stroke-width="1.600"/></svg>
<div style="left:1029.500px;top:487px;width:219px;height:12.500px;background:#383838;border:1px solid #424242"></div>
<span class="t" style="left:1031.500px;top:488.5px;font-size:10.300px;color:#4c4c4c">Spikes</span>
<span class="t" style="right:18.5px;top:488.5px;font-size:10.300px;color:#4c4c4c">2</span>
<svg style="left:1238px;top:488.5px" width="9" height="10" viewBox="0 0 9 10"><path d="M1.200 4L4.500 1.200 7.800 4M1.200 6L4.500 8.800 7.800 6" fill="none" stroke="#545454" stroke-width="1.600"/></svg>
<div style="left:1029.500px;top:503px;width:219px;height:12.500px;background:#383838;border:1px solid #424242"></div>
<span class="t" style="left:1031.500px;top:504.5px;font-size:10.300px;color:#4c4c4c">Hardness</span>
<span class="t" style="right:18.5px;top:504.5px;font-size:10.300px;color:#4c4c4c">0.00</span>
<svg style="left:1238px;top:504.5px" width="9" height="10" viewBox="0 0 9 10"><path d="M1.200 4L4.500 1.200 7.800 4M1.200 6L4.500 8.800 7.800 6" fill="none" stroke="#545454" stroke-width="1.600"/></svg>
<div style="left:1029.500px;top:519px;width:219px;height:12.500px;background:#383838;border:1px solid #424242"></div>
<span class="t" style="left:1031.500px;top:520.5px;font-size:10.300px;color:#4c4c4c">Aspect ratio</span>
<span class="t" style="right:18.5px;top:520.5px;font-size:10.300px;color:#4c4c4c">1.0</span>
<svg style="left:1238px;top:520.5px" width="9" height="10" viewBox="0 0 9 10"><path d="M1.200 4L4.500 1.200 7.800 4M1.200 6L4.500 8.800 7.800 6" fill="none" stroke="#545454" stroke-width="1.600"/></svg>
<div style="left:1029.500px;top:535px;width:219px;height:12.500px;background:#383838;border:1px solid #424242"></div>
<span class="t" style="left:1031.500px;top:536.5px;font-size:10.300px;color:#4c4c4c">Angle</span>
<span class="t" style="right:18.5px;top:536.5px;font-size:10.300px;color:#4c4c4c">0.0</span>
<svg style="left:1238px;top:536.5px" width="9" height="10" viewBox="0 0 9 10"><path d="M1.200 4L4.500 1.200 7.800 4M1.200 6L4.500 8.800 7.800 6" fill="none" stroke="#545454" stroke-width="1.600"/></svg>
<!-- spacing -->
<div style="left:1029.500px;top:551px;width:219px;height:12.500px;background:#383838;border:1px solid #424242"></div>
<div style="left:1030px;top:551.500px;width:48.500px;height:11.500px;background:#5a5a5a"></div>
<div style="left:1078.500px;top:551.500px;width:1.200px;height:11.500px;background:#161616"></div>
<span class="t" style="left:1031.500px;top:552.500px;font-size:10.300px;color:#f0f0f0">Spacing</span>
<span class="t" style="right:18.5px;top:552.500px;font-size:10.300px;color:#4c4c4c">50.0</span>
<svg style="left:1238px;top:552.5px" width="9" height="10" viewBox="0 0 9 10"><path d="M1.200 4L4.500 1.200 7.800 4M1.200 6L4.500 8.800 7.800 6" fill="none" stroke="#545454" stroke-width="1.600"/></svg>
<!-- dock separator grip -->
<svg style="left:1130px;top:566.500px" width="18" height="3" viewBox="0 0 18 3"><path d="M0 0.500h4v2H0zM7 0.500h4v2H7zM14 0.500h4v2h-4z" fill="#c4c4c4"/></svg>
<!-- dock 2 tabs -->
<div style="left:1082.500px;top:573px;width:119px;height:20.500px;background:#222"></div>
<div style="left:1149.500px;top:573px;width:1px;height:20px;background:#3a3a3a"></div>
<div style="left:1027px;top:593px;width:225px;height:258px;background:#3b3b3b;border-top:1px solid #555;border-left:1px solid #555"></div>
<div style="left:1027px;top:569.800px;width:56px;height:24.200px;background:#3b3b3b;border:1px solid #555;border-bottom:none"></div>
<svg style="left:1029px;top:573.500px" width="17" height="17" viewBox="0 0 17 17"><path d="M4.400 0.400h12.200l-4 3.700H0.400z" fill="#d0d0d0"/><path d="M4.400 6.400h12.200l-4 3.700H0.400z" fill="#d0d0d0"/><path d="M4.400 12.400h12.200l-4 3.700H0.400z" fill="#d0d0d0"/></svg>
<span class="t" style="left:1047px;top:577px;font-size:10.300px;color:#f0f0f0">Layers</span>
<svg style="left:1084px;top:574.200px" width="17" height="17" viewBox="0 0 17 17"><rect x="0.600" y="0.600" width="15.400" height="15.800" fill="none" stroke="#d8d8d8" stroke-width="1.100"/><path d="M4.300 3.200v10.600" stroke="#6e6e6e" stroke-width="2"/><path d="M8.300 3.200v10.600" stroke="#a4a4a4" stroke-width="2"/><path d="M12.300 3.200v10.600" stroke="#dcdcdc" stroke-width="2"/></svg>
<span class="t" style="left:1102px;top:577px;font-size:10.300px;color:#e0e0e0">Channels</span>
<svg style="left:1151px;top:574px" width="18" height="17" viewBox="0 0 18 17"><path d="M2.600 14.600c.6-3.600 2.800-5.600 6.400-5.600s5.800 2 6.400 5.600" fill="none" stroke="#d0d0d0" stroke-width="1.900" stroke-linecap="round"/><path d="M1 6.900h16" stroke="#d0d0d0" stroke-width="1.300"/><path d="M1 5.100h3.600v3.600H1zM13.400 5.100H17v3.600h-3.600z" fill="#d0d0d0"/></svg>
<span class="t" style="left:1170.400px;top:577px;font-size:10.300px;color:#e0e0e0">Paths</span>
<svg style="left:1237px;top:577px" width="10.400" height="10.400" viewBox="0 0 11 11"><rect x="0.600" y="0.600" width="9.800" height="9.800" fill="none" stroke="#d0d0d0" stroke-width="1.100"/><path d="M8 2.600v5.800L3 5.500z" fill="#c8c8c8"/></svg>
<!-- mode combo -->
<div style="left:1029px;top:596px;width:173.500px;height:25px;background:#2c2c2c;border:1px solid #1c1c1c;border-radius:3.500px"></div>
<span class="t" style="left:1036px;top:602.500px;font-size:10.300px;color:#e6e6e6">Mode</span>
<span class="t" style="left:1145px;top:602.600px;font-size:10.100px;color:#e6e6e6">Normal</span>
<svg style="left:1183px;top:604.500px" width="14" height="9" viewBox="0 0 14 9"><path d="M1.200 1.300L7 7.300 12.800 1.300" fill="none" stroke="#e6e6e6" stroke-width="1.400"/></svg>
<div style="left:1204.500px;top:596px;width:45.500px;height:25px;background:#2c2c2c;border:1px solid #1c1c1c;border-radius:3.500px"></div>
<svg style="left:1208px;top:601px" width="18" height="17" viewBox="1208 601 18 17"><path d="M1213.200 607A6 6 0 1 1 1219.400 615.400" fill="none" stroke="#d0d0d0" stroke-width="2"/><path d="M1209 607.200l6.600-.8-1.400 6z" fill="#d0d0d0"/><circle cx="1213.400" cy="614.400" r="2.400" fill="#d0d0d0"/></svg>
<svg style="left:1230.500px;top:604.500px" width="14" height="9" viewBox="0 0 14 9"><path d="M1.200 1.300L7 7.300 12.800 1.300" fill="none" stroke="#e6e6e6" stroke-width="1.400"/></svg>
<!-- opacity -->
<div style="left:1029px;top:623.500px;width:220.500px;height:13.500px;background:#5a5a5a;border:1px solid #707070"></div>
<div style="left:1235.500px;top:624.500px;width:13px;height:11.500px;background:#2e2e2e"></div>
<div style="left:1235px;top:624.500px;width:1px;height:11.500px;background:#1c1c1c"></div>
<span class="t" style="left:1031px;top:625.300px;font-size:10.300px;color:#f0f0f0">Opacity</span>
<span class="t" style="right:18.200000000000045px;top:625.300px;font-size:10.300px;color:#f0f0f0;letter-spacing:0.150px">100.0</span>
<svg style="left:1238px;top:625.5px" width="9" height="10" viewBox="0 0 9 10"><path d="M1.200 4L4.500 1.200 7.800 4M1.200 6L4.500 8.800 7.800 6" fill="none" stroke="#c8c8c8" stroke-width="1.600"/></svg>
<!-- lock -->
<span class="t" style="left:1029.300px;top:645px;font-size:10.300px;color:#dedede">Lock:</span>
<svg style="left:1060px;top:643px" width="17" height="17" viewBox="0 0 17 17"><path d="M16 0.500c-1.300 3.500-4 8.400-6.900 11.800l-1.700-1.200C10.200 6.600 13 3 16 0.500z" fill="#bebebe"/><path d="M6.800 11.700l1.900 1.300c.6 2-1.700 3.300-4.200 3.300-1.500 0-2.800-.2-3.700-.7 2.200-.2 2.900-.9 3.400-2 .4-1.200 1.300-2.100 2.600-1.900z" fill="#bebebe"/></svg>
<svg style="left:1087px;top:643px" width="16" height="16" viewBox="0 0 16 16"><path d="M8 0.300l2.800 3.200H8.800v3.700h3.700V5.200L15.700 8l-3.200 2.800V8.800H8.800v3.700h2L8 15.700l-2.800-3.200h2V8.800H3.500v2L0.300 8l3.200-2.800v2h3.700V3.500h-2z" fill="#bebebe"/></svg>
<svg style="left:1114px;top:643px" width="16" height="16" viewBox="0 0 16 16"><rect width="16" height="16" fill="#6c6c6c"/><path d="M0 0h4v4H0zM8 0h4v4H8zM4 4h4v4H4zM12 4h4v4h-4zM0 8h4v4H0zM8 8h4v4H8zM4 12h4v4H4zM12 12h4v4h-4z" fill="#c4c4c4"/></svg>
<!-- layer list -->
<div style="left:1030px;top:666px;width:219.500px;height:161px;background:#303030"></div>
<div style="left:1030px;top:666px;width:219.500px;height:25px;background:#464646"></div>
<div style="left:1057px;top:666px;width:1.700px;height:25px;background:#383838"></div>
<div style="left:1085px;top:666px;width:1.700px;height:25px;background:#383838"></div>
<svg style="left:1036px;top:674.7px" width="16" height="9.600" viewBox="0 0 20 12"><path d="M0.800 6C4 1.600 7 0.800 10 0.800s6 0.800 9.200 5.200C16 10.400 13 11.200 10 11.200S4 10.400 0.800 6z" fill="none" stroke="#c4c4c4" stroke-width="1.700"/><circle cx="10" cy="6" r="2.900" fill="none" stroke="#c4c4c4" stroke-width="1.900"/></svg>
<svg style="left:1067px;top:670.500px" width="10" height="17" viewBox="0 0 10 17"><rect x="2" y="1.500" width="6" height="7.200" rx="1.200" fill="none" stroke="#c8c8c8" stroke-width="1.900"/><path d="M2 16.500v-2.400c0-1.200.8-1.800 1.800-1.800h2.400c1 0 1.800.6 1.800 1.800v2.400" fill="none" stroke="#c8c8c8" stroke-width="1.900"/><path d="M5 9v3.400" stroke="#c8c8c8" stroke-width="1.900"/></svg>
<div style="left:1030px;top:720px;width:219.500px;height:28px;background:#1d1d1d"></div>
<svg style="left:1034px;top:700px" width="20" height="12" viewBox="0 0 20 12"><path d="M0.800 6C4 1.600 7 0.800 10 0.800s6 0.800 9.200 5.200C16 10.400 13 11.200 10 11.200S4 10.400 0.800 6z" fill="none" stroke="#d8d8d8" stroke-width="1.500"/><circle cx="10" cy="6" r="3" fill="none" stroke="#d8d8d8" stroke-width="1.600"/></svg>
<svg style="left:1034px;top:728px" width="20" height="12" viewBox="0 0 20 12"><path d="M0.800 6C4 1.600 7 0.800 10 0.800s6 0.800 9.200 5.200C16 10.400 13 11.200 10 11.200S4 10.400 0.800 6z" fill="none" stroke="#d8d8d8" stroke-width="1.500"/><circle cx="10" cy="6" r="3" fill="none" stroke="#d8d8d8" stroke-width="1.600"/></svg>
<svg id="lthumb1" style="left:1105px;top:697px" width="37" height="19" viewBox="0 0 37 19"><rect width="37" height="19" fill="#000"/><svg x="1.5" y="1.5" width="34" height="16" viewBox="283 298 637 290" preserveAspectRatio="none"><rect x="283" y="298" width="637" height="290" fill="#ece7f8"/><use href="#bl" fill="#8d62cc" stroke="#8d62cc" stroke-width="5"/></svg></svg>
<span class="t" style="left:1145px;top:700px;font-size:10.600px;color:#d4d4d4">25030607_A5_XL.tif</span>
<svg id="lthumb2" style="left:1105px;top:724.5px" width="37" height="19" viewBox="0 0 37 19"><rect width="37" height="19" fill="#fff"/><svg x="1.5" y="1.5" width="34" height="16" viewBox="283 298 637 290" preserveAspectRatio="none"><rect x="283" y="298" width="637" height="290" fill="#1b1b1b"/><use href="#bl" fill="#3c3c3c" stroke="#3c3c3c" stroke-width="5"/></svg></svg>
<span class="t" style="left:1145px;top:728px;font-size:10.600px;color:#f0f0f0">2P241018012A2.tif</span>
<!-- layer buttons -->
<svg style="left:1027px;top:828px" width="225" height="23" viewBox="1027 828 225 23">
<defs><pattern id="ck2" width="2" height="2" patternUnits="userSpaceOnUse"><rect width="1" height="1" fill="#c4c4c4"/><rect x="1" y="1" width="1" height="1" fill="#c4c4c4"/></pattern></defs>
<path d="M1036.800 842v6.200h10.600v-10.800l-3-2.600h-2.200" fill="none" stroke="#c4c4c4" stroke-width="1.200"/><path d="M1044 835v3h3.400" fill="none" stroke="#c4c4c4" stroke-width="1.100"/>
<path d="M1034 836.200h7.800v1.800h-7.800zM1037 833.200h1.800v7.800h-1.800z" fill="#e0e0e0"/>
<path d="M1061 833h5.600l1 2h7v2.400h-12v11.600H1061z" fill="#c4c4c4"/><path d="M1063.400 838.200h13.800v10.800h-13.800z" fill="#c4c4c4"/><path d="M1066.200 843h8M1070.200 839v8" stroke="#3b3b3b" stroke-width="1.700"/>
<path d="M1089.800 844.400l6.300-7 6.300 7" fill="none" stroke="#c4c4c4" stroke-width="2.100" stroke-linecap="round"/>
<path d="M1116.600 838l6.500 6.800 6.500-6.800" fill="none" stroke="url(#ck2)" stroke-width="2.200"/>
<rect x="1143.700" y="835.600" width="9" height="7.200" fill="none" stroke="#c4c4c4" stroke-width="1.300"/><path d="M1147.600 844.600v2.100h9.300v-7.200h-2.200" fill="none" stroke="#c4c4c4" stroke-width="1.300"/>
<path d="M1172 835.200h6.500l-3 2.800h-6.500zM1172 839.300h6.500l-3 2.800h-6.500zM1172 843.400h6.500l-3 2.800h-6.500z" fill="#c4c4c4"/><path d="M1182 835.500v8" stroke="#c4c4c4" stroke-width="1.500"/><path d="M1179 842.300h6l-3 4.400z" fill="#c4c4c4"/>
<path d="M1198.300 833h9v5c0 2.600-2 4.400-4.500 4.400s-4.500-1.800-4.500-4.400z" fill="#c4c4c4"/><path d="M1199.600 835.300l2.200.7M1206 835.300l-2.200.7" stroke="#3b3b3b" stroke-width="0.900"/><path d="M1200.600 838.300h4.400c-.3 1.400-1.200 2-2.200 2s-1.900-.6-2.200-2z" fill="#3b3b3b"/>
<path d="M1200.500 841h11.600l-4.300 5.900h-11.600z" fill="#c4c4c4"/>
<rect x="1226" y="833" width="16.200" height="15.800" rx="1.800" fill="#c8c8c8"/><path d="M1229.400 836.200l9.400 9.400M1238.800 836.200l-9.400 9.400" stroke="#333" stroke-width="2.300"/>
</svg>
<!-- /RIGHT-PANEL -->

</div>
</body>
</html>
